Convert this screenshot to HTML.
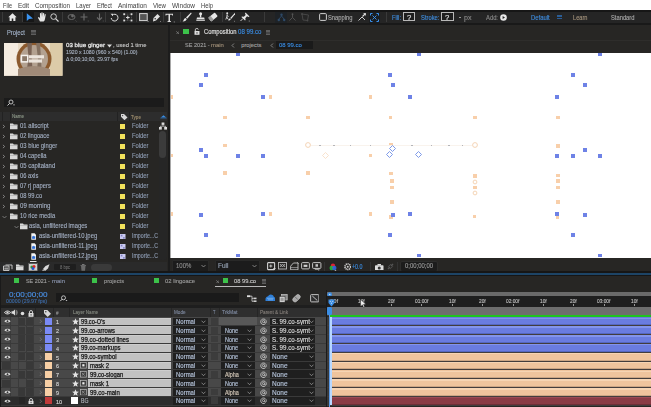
<!DOCTYPE html><html><head><meta charset="utf-8"><style>
html,body{margin:0;padding:0;width:651px;height:407px;overflow:hidden;background:#1c1c1c}
body>div{position:absolute}
.t{position:absolute;white-space:nowrap;font-family:"Liberation Sans",sans-serif;transform-origin:0 0;-webkit-text-stroke:0.12px currentColor}
</style></head><body>
<div style="left:0px;top:0px;width:651px;height:407px;background:#1c1c1c;"></div>
<div style="left:0px;top:0px;width:651px;height:10.5px;background:#ffffff;"></div>
<div class="t" style="left:3px;top:2.10px;font-size:7.8px;line-height:7.8px;color:#404040;font-weight:normal;transform:scaleX(0.716);-webkit-text-stroke:0;">File</div>
<div class="t" style="left:18px;top:2.10px;font-size:7.8px;line-height:7.8px;color:#404040;font-weight:normal;transform:scaleX(0.818);-webkit-text-stroke:0;">Edit</div>
<div class="t" style="left:35px;top:2.10px;font-size:7.8px;line-height:7.8px;color:#404040;font-weight:normal;transform:scaleX(0.807);-webkit-text-stroke:0;">Composition</div>
<div class="t" style="left:76px;top:2.10px;font-size:7.8px;line-height:7.8px;color:#404040;font-weight:normal;transform:scaleX(0.769);-webkit-text-stroke:0;">Layer</div>
<div class="t" style="left:97px;top:2.10px;font-size:7.8px;line-height:7.8px;color:#404040;font-weight:normal;transform:scaleX(0.758);-webkit-text-stroke:0;">Effect</div>
<div class="t" style="left:118px;top:2.10px;font-size:7.8px;line-height:7.8px;color:#404040;font-weight:normal;transform:scaleX(0.836);-webkit-text-stroke:0;">Animation</div>
<div class="t" style="left:153px;top:2.10px;font-size:7.8px;line-height:7.8px;color:#404040;font-weight:normal;transform:scaleX(0.775);-webkit-text-stroke:0;">View</div>
<div class="t" style="left:172px;top:2.10px;font-size:7.8px;line-height:7.8px;color:#404040;font-weight:normal;transform:scaleX(0.829);-webkit-text-stroke:0;">Window</div>
<div class="t" style="left:201px;top:2.10px;font-size:7.8px;line-height:7.8px;color:#404040;font-weight:normal;transform:scaleX(0.748);-webkit-text-stroke:0;">Help</div>
<div style="left:0px;top:10.5px;width:651px;height:12.5px;background:#252525;"></div>
<div style="left:0px;top:10.4px;width:651px;height:1.3px;background:#161616;"></div>
<div style="left:0px;top:22.8px;width:651px;height:2.3px;background:#191919;"></div>
<div style="left:0px;top:25.1px;width:168.3px;height:247.9px;background:#272624;"></div>
<div class="t" style="left:7px;top:29.91px;font-size:6.6px;line-height:6.6px;color:#a6b6cc;font-weight:normal;transform:scaleX(0.876);">Project</div>
<div style="left:31px;top:30.2px;width:4.6px;height:5.2px;background:#5e5e5e;"></div>
<div style="left:31px;top:31.8px;width:4.6px;height:0.5px;background:#454545;"></div>
<div style="left:31px;top:33.4px;width:4.6px;height:0.5px;background:#454545;"></div>
<svg style="position:absolute;left:4px;top:43px;" width="58.5" height="32.8" viewBox="0 0 58.5 32.8"><defs><filter id="bl" x="-5%" y="-5%" width="110%" height="110%"><feGaussianBlur stdDeviation="0.5"/></filter><clipPath id="cp"><rect width="58.5" height="32.8"/></clipPath></defs>
<g clip-path="url(#cp)"><rect width="59" height="33" fill="#e9dbc6"/>
<g filter="url(#bl)">
<rect x="-2" y="-2" width="16" height="37" fill="#f5ece0"/>
<rect x="46" y="-2" width="15" height="37" fill="#dccba8"/>
<circle cx="30" cy="16" r="17.5" fill="#8c5a2e"/>
<circle cx="30" cy="16" r="14" fill="#b3a190"/>
<path d="M23 -1 L28 -1 L27.5 12 L29 34 L22 34 L24.5 14Z" fill="#7a6454"/>
<path d="M32 -1 L36 -1 L38 34 L32.5 34 L34 16Z" fill="#837060"/>
<path d="M14 26 Q30 20 46 26 L46 34 L14 34Z" fill="#a08a78"/>
<rect x="16.7" y="11.7" width="7.8" height="7.9" fill="#f6f2ee"/>
<rect x="18.2" y="13.2" width="4.8" height="4.9" fill="#8a7868"/>
<rect x="25" y="12.2" width="15" height="3.2" fill="#ece4dc"/>
<rect x="25" y="16.4" width="13" height="3.2" fill="#ece4dc"/>
</g></g></svg>
<div class="t" style="left:66px;top:42.69px;font-size:5.8px;line-height:5.8px;color:#dadada;font-weight:normal;transform:scaleX(1.061);-webkit-text-stroke:0.35px #dadada;">03 blue ginger</div>
<svg style="position:absolute;left:107px;top:43.5px;" width="5" height="4" viewBox="0 0 5 4"><path d="M0 0.5 L5 0.5 L2.5 3.5Z" fill="#ddd"/></svg>
<div class="t" style="left:113px;top:42.86px;font-size:5.6px;line-height:5.6px;color:#c8c8c8;font-weight:normal;transform:scaleX(1.042);">, used 1 time</div>
<div class="t" style="left:66px;top:49.93px;font-size:5.4px;line-height:5.4px;color:#a9b3c2;font-weight:normal;transform:scaleX(0.965);">1920 x 1080  (960 x 540) (1.00)</div>
<div class="t" style="left:66px;top:56.83px;font-size:5.4px;line-height:5.4px;color:#a9b3c2;font-weight:normal;transform:scaleX(0.936);">Δ 0;00;10;00, 29.97 fps</div>
<div style="left:4.3px;top:98px;width:160px;height:9px;background:#1b1b1b;"></div>
<svg style="position:absolute;left:6px;top:99px;" width="10" height="8" viewBox="0 0 10 8"><circle cx="5" cy="3" r="2" fill="none" stroke="#ccc" stroke-width="0.9"/><path d="M3.6 4.4 L1.5 6.5" stroke="#ccc" stroke-width="1"/><path d="M7 5.5 L9 5.5 L8 6.7Z" fill="#ccc"/></svg>
<div style="left:0px;top:112px;width:167px;height:8.5px;background:#2d2d2d;"></div>
<div style="left:1.5px;top:112px;width:0.8px;height:8.5px;background:#222;"></div>
<div style="left:9.5px;top:112px;width:0.8px;height:8.5px;background:#222;"></div>
<div style="left:116.8px;top:112px;width:0.8px;height:8.5px;background:#222;"></div>
<div style="left:128.5px;top:112px;width:0.8px;height:8.5px;background:#222;"></div>
<div class="t" style="left:12px;top:114.24px;font-size:5.5px;line-height:5.5px;color:#8f9a8a;font-weight:normal;transform:scaleX(0.818);">Name</div>
<svg style="position:absolute;left:119.5px;top:112.5px;" width="8" height="7.5" viewBox="0 0 8 7.5"><path d="M1 1 L4 1 L7.5 4.5 L4.5 7.2 L1 3.8Z" fill="#d8d8d8"/><circle cx="2.6" cy="2.6" r="0.7" fill="#444"/></svg>
<div class="t" style="left:131px;top:114.74px;font-size:5.5px;line-height:5.5px;color:#a08f6e;font-weight:normal;transform:scaleX(0.839);">Type</div>
<svg style="position:absolute;left:159.5px;top:113.5px;" width="7" height="5" viewBox="0 0 7 5"><path d="M0.8 3.6 L3.5 1.3 L6.2 3.6Z" fill="#3a8ee6"/><rect x="0.3" y="3.7" width="6.4" height="0.7" fill="#2a6ab0"/></svg>
<svg style="position:absolute;left:2.3px;top:124px;" width="4" height="5" viewBox="0 0 4 5"><path d="M0.9 0.9 L2.7 2.5 L0.9 4.1" fill="none" stroke="#9a9a9a" stroke-width="0.8"/></svg>
<svg style="position:absolute;left:10px;top:123px;" width="8" height="6.5" viewBox="0 0 8 6.5"><path d="M0 0.5 L3 0.5 L3.8 1.5 L7.5 1.5 L7.5 6.2 L0 6.2Z" fill="#d9d9d9"/><rect x="0" y="2.2" width="7.5" height="0.5" fill="#999"/></svg>
<div class="t" style="left:19.6px;top:123.34px;font-size:6.8px;line-height:6.8px;color:#a4b0c4;font-weight:normal;transform:scaleX(0.883);">01 allscript</div>
<div style="left:120px;top:124px;width:5.2px;height:5px;background:#f2e25c;"></div>
<div class="t" style="left:132px;top:123.34px;font-size:6.8px;line-height:6.8px;color:#8f9db4;font-weight:normal;transform:scaleX(0.856);">Folder</div>
<svg style="position:absolute;left:2.3px;top:134px;" width="4" height="5" viewBox="0 0 4 5"><path d="M0.9 0.9 L2.7 2.5 L0.9 4.1" fill="none" stroke="#9a9a9a" stroke-width="0.8"/></svg>
<svg style="position:absolute;left:10px;top:133px;" width="8" height="6.5" viewBox="0 0 8 6.5"><path d="M0 0.5 L3 0.5 L3.8 1.5 L7.5 1.5 L7.5 6.2 L0 6.2Z" fill="#d9d9d9"/><rect x="0" y="2.2" width="7.5" height="0.5" fill="#999"/></svg>
<div class="t" style="left:19.6px;top:133.34px;font-size:6.8px;line-height:6.8px;color:#a4b0c4;font-weight:normal;transform:scaleX(0.845);">02 lingoace</div>
<div style="left:120px;top:134px;width:5.2px;height:5px;background:#f2e25c;"></div>
<div class="t" style="left:132px;top:133.34px;font-size:6.8px;line-height:6.8px;color:#8f9db4;font-weight:normal;transform:scaleX(0.856);">Folder</div>
<svg style="position:absolute;left:2.3px;top:144px;" width="4" height="5" viewBox="0 0 4 5"><path d="M0.9 0.9 L2.7 2.5 L0.9 4.1" fill="none" stroke="#9a9a9a" stroke-width="0.8"/></svg>
<svg style="position:absolute;left:10px;top:143px;" width="8" height="6.5" viewBox="0 0 8 6.5"><path d="M0 0.5 L3 0.5 L3.8 1.5 L7.5 1.5 L7.5 6.2 L0 6.2Z" fill="#d9d9d9"/><rect x="0" y="2.2" width="7.5" height="0.5" fill="#999"/></svg>
<div class="t" style="left:19.6px;top:143.34px;font-size:6.8px;line-height:6.8px;color:#a4b0c4;font-weight:normal;transform:scaleX(0.861);">03 blue ginger</div>
<div style="left:120px;top:144px;width:5.2px;height:5px;background:#f2e25c;"></div>
<div class="t" style="left:132px;top:143.34px;font-size:6.8px;line-height:6.8px;color:#8f9db4;font-weight:normal;transform:scaleX(0.856);">Folder</div>
<svg style="position:absolute;left:2.3px;top:154px;" width="4" height="5" viewBox="0 0 4 5"><path d="M0.9 0.9 L2.7 2.5 L0.9 4.1" fill="none" stroke="#9a9a9a" stroke-width="0.8"/></svg>
<svg style="position:absolute;left:10px;top:153px;" width="8" height="6.5" viewBox="0 0 8 6.5"><path d="M0 0.5 L3 0.5 L3.8 1.5 L7.5 1.5 L7.5 6.2 L0 6.2Z" fill="#d9d9d9"/><rect x="0" y="2.2" width="7.5" height="0.5" fill="#999"/></svg>
<div class="t" style="left:19.6px;top:153.34px;font-size:6.8px;line-height:6.8px;color:#a4b0c4;font-weight:normal;transform:scaleX(0.858);">04 capella</div>
<div style="left:120px;top:154px;width:5.2px;height:5px;background:#f2e25c;"></div>
<div class="t" style="left:132px;top:153.34px;font-size:6.8px;line-height:6.8px;color:#8f9db4;font-weight:normal;transform:scaleX(0.856);">Folder</div>
<svg style="position:absolute;left:2.3px;top:164px;" width="4" height="5" viewBox="0 0 4 5"><path d="M0.9 0.9 L2.7 2.5 L0.9 4.1" fill="none" stroke="#9a9a9a" stroke-width="0.8"/></svg>
<svg style="position:absolute;left:10px;top:163px;" width="8" height="6.5" viewBox="0 0 8 6.5"><path d="M0 0.5 L3 0.5 L3.8 1.5 L7.5 1.5 L7.5 6.2 L0 6.2Z" fill="#d9d9d9"/><rect x="0" y="2.2" width="7.5" height="0.5" fill="#999"/></svg>
<div class="t" style="left:19.6px;top:163.34px;font-size:6.8px;line-height:6.8px;color:#a4b0c4;font-weight:normal;transform:scaleX(0.870);">05 capitaland</div>
<div style="left:120px;top:164px;width:5.2px;height:5px;background:#f2e25c;"></div>
<div class="t" style="left:132px;top:163.34px;font-size:6.8px;line-height:6.8px;color:#8f9db4;font-weight:normal;transform:scaleX(0.856);">Folder</div>
<svg style="position:absolute;left:2.3px;top:174px;" width="4" height="5" viewBox="0 0 4 5"><path d="M0.9 0.9 L2.7 2.5 L0.9 4.1" fill="none" stroke="#9a9a9a" stroke-width="0.8"/></svg>
<svg style="position:absolute;left:10px;top:173px;" width="8" height="6.5" viewBox="0 0 8 6.5"><path d="M0 0.5 L3 0.5 L3.8 1.5 L7.5 1.5 L7.5 6.2 L0 6.2Z" fill="#d9d9d9"/><rect x="0" y="2.2" width="7.5" height="0.5" fill="#999"/></svg>
<div class="t" style="left:19.6px;top:173.34px;font-size:6.8px;line-height:6.8px;color:#a4b0c4;font-weight:normal;transform:scaleX(0.849);">06 axis</div>
<div style="left:120px;top:174px;width:5.2px;height:5px;background:#f2e25c;"></div>
<div class="t" style="left:132px;top:173.34px;font-size:6.8px;line-height:6.8px;color:#8f9db4;font-weight:normal;transform:scaleX(0.856);">Folder</div>
<svg style="position:absolute;left:2.3px;top:184px;" width="4" height="5" viewBox="0 0 4 5"><path d="M0.9 0.9 L2.7 2.5 L0.9 4.1" fill="none" stroke="#9a9a9a" stroke-width="0.8"/></svg>
<svg style="position:absolute;left:10px;top:183px;" width="8" height="6.5" viewBox="0 0 8 6.5"><path d="M0 0.5 L3 0.5 L3.8 1.5 L7.5 1.5 L7.5 6.2 L0 6.2Z" fill="#d9d9d9"/><rect x="0" y="2.2" width="7.5" height="0.5" fill="#999"/></svg>
<div class="t" style="left:19.6px;top:183.34px;font-size:6.8px;line-height:6.8px;color:#a4b0c4;font-weight:normal;transform:scaleX(0.858);">07 rj papers</div>
<div style="left:120px;top:184px;width:5.2px;height:5px;background:#f2e25c;"></div>
<div class="t" style="left:132px;top:183.34px;font-size:6.8px;line-height:6.8px;color:#8f9db4;font-weight:normal;transform:scaleX(0.856);">Folder</div>
<svg style="position:absolute;left:2.3px;top:194px;" width="4" height="5" viewBox="0 0 4 5"><path d="M0.9 0.9 L2.7 2.5 L0.9 4.1" fill="none" stroke="#9a9a9a" stroke-width="0.8"/></svg>
<svg style="position:absolute;left:10px;top:193px;" width="8" height="6.5" viewBox="0 0 8 6.5"><path d="M0 0.5 L3 0.5 L3.8 1.5 L7.5 1.5 L7.5 6.2 L0 6.2Z" fill="#d9d9d9"/><rect x="0" y="2.2" width="7.5" height="0.5" fill="#999"/></svg>
<div class="t" style="left:19.6px;top:193.34px;font-size:6.8px;line-height:6.8px;color:#a4b0c4;font-weight:normal;transform:scaleX(0.851);">08 99.co</div>
<div style="left:120px;top:194px;width:5.2px;height:5px;background:#f2e25c;"></div>
<div class="t" style="left:132px;top:193.34px;font-size:6.8px;line-height:6.8px;color:#8f9db4;font-weight:normal;transform:scaleX(0.856);">Folder</div>
<svg style="position:absolute;left:2.3px;top:204px;" width="4" height="5" viewBox="0 0 4 5"><path d="M0.9 0.9 L2.7 2.5 L0.9 4.1" fill="none" stroke="#9a9a9a" stroke-width="0.8"/></svg>
<svg style="position:absolute;left:10px;top:203px;" width="8" height="6.5" viewBox="0 0 8 6.5"><path d="M0 0.5 L3 0.5 L3.8 1.5 L7.5 1.5 L7.5 6.2 L0 6.2Z" fill="#d9d9d9"/><rect x="0" y="2.2" width="7.5" height="0.5" fill="#999"/></svg>
<div class="t" style="left:19.6px;top:203.34px;font-size:6.8px;line-height:6.8px;color:#a4b0c4;font-weight:normal;transform:scaleX(0.897);">09 morning</div>
<div style="left:120px;top:204px;width:5.2px;height:5px;background:#f2e25c;"></div>
<div class="t" style="left:132px;top:203.34px;font-size:6.8px;line-height:6.8px;color:#8f9db4;font-weight:normal;transform:scaleX(0.856);">Folder</div>
<svg style="position:absolute;left:2px;top:214.5px;" width="5" height="4" viewBox="0 0 5 4"><path d="M0.5 1 L2.5 3 L4.5 1" fill="none" stroke="#8a8a8a" stroke-width="0.8"/></svg>
<svg style="position:absolute;left:10px;top:213px;" width="8" height="6.5" viewBox="0 0 8 6.5"><path d="M0 0.5 L3 0.5 L3.8 1.5 L7.5 1.5 L7.5 6.2 L0 6.2Z" fill="#d9d9d9"/><rect x="0" y="2.2" width="7.5" height="0.5" fill="#999"/></svg>
<div class="t" style="left:19.6px;top:213.34px;font-size:6.8px;line-height:6.8px;color:#a4b0c4;font-weight:normal;transform:scaleX(0.862);">10 rice media</div>
<div style="left:120px;top:214px;width:5.2px;height:5px;background:#f2e25c;"></div>
<div class="t" style="left:132px;top:213.34px;font-size:6.8px;line-height:6.8px;color:#8f9db4;font-weight:normal;transform:scaleX(0.856);">Folder</div>
<svg style="position:absolute;left:13.5px;top:224.5px;" width="5" height="4" viewBox="0 0 5 4"><path d="M0.5 1 L2.5 3 L4.5 1" fill="none" stroke="#8a8a8a" stroke-width="0.8"/></svg>
<svg style="position:absolute;left:20px;top:223px;" width="8" height="6.5" viewBox="0 0 8 6.5"><path d="M0 0.5 L3 0.5 L3.8 1.5 L7.5 1.5 L7.5 6.2 L0 6.2Z" fill="#d9d9d9"/><rect x="0" y="2.2" width="7.5" height="0.5" fill="#999"/></svg>
<div class="t" style="left:28.7px;top:223.34px;font-size:6.8px;line-height:6.8px;color:#a4b0c4;font-weight:normal;transform:scaleX(0.857);">asia, unfiltered images</div>
<div style="left:120px;top:224px;width:5.2px;height:5px;background:#f2e25c;"></div>
<div class="t" style="left:132px;top:223.34px;font-size:6.8px;line-height:6.8px;color:#8f9db4;font-weight:normal;transform:scaleX(0.856);">Folder</div>
<svg style="position:absolute;left:30.8px;top:232.5px;" width="5.5" height="7" viewBox="0 0 5.5 7"><path d="M0.3 0.3 L3.6 0.3 L5.2 1.9 L5.2 6.7 L0.3 6.7Z" fill="#f2f2f2"/><path d="M1.2 5.6 L2.4 2.5 L3.6 5.6Z" fill="#2f6fd6"/><rect x="1.2" y="3.3" width="3" height="2.4" fill="#2f6fd6"/></svg>
<div class="t" style="left:39.2px;top:233.34px;font-size:6.8px;line-height:6.8px;color:#a4b0c4;font-weight:normal;transform:scaleX(0.865);">asia-unfiltered-10.jpeg</div>
<svg style="position:absolute;left:120px;top:233.5px;" width="5.5" height="5.5" viewBox="0 0 5.5 5.5"><rect x="0" y="0" width="5.5" height="5.5" fill="#c9c9f0"/><rect x="0.8" y="0.8" width="1.6" height="1.6" fill="#8080c0"/><rect x="3.1" y="3.1" width="1.6" height="1.6" fill="#8080c0"/></svg>
<div class="t" style="left:132px;top:233.34px;font-size:6.8px;line-height:6.8px;color:#8f9db4;font-weight:normal;transform:scaleX(0.773);">Importe...C</div>
<svg style="position:absolute;left:30.8px;top:242.5px;" width="5.5" height="7" viewBox="0 0 5.5 7"><path d="M0.3 0.3 L3.6 0.3 L5.2 1.9 L5.2 6.7 L0.3 6.7Z" fill="#f2f2f2"/><path d="M1.2 5.6 L2.4 2.5 L3.6 5.6Z" fill="#2f6fd6"/><rect x="1.2" y="3.3" width="3" height="2.4" fill="#2f6fd6"/></svg>
<div class="t" style="left:39.2px;top:243.34px;font-size:6.8px;line-height:6.8px;color:#a4b0c4;font-weight:normal;transform:scaleX(0.872);">asia-unfiltered-11.jpeg</div>
<svg style="position:absolute;left:120px;top:243.5px;" width="5.5" height="5.5" viewBox="0 0 5.5 5.5"><rect x="0" y="0" width="5.5" height="5.5" fill="#c9c9f0"/><rect x="0.8" y="0.8" width="1.6" height="1.6" fill="#8080c0"/><rect x="3.1" y="3.1" width="1.6" height="1.6" fill="#8080c0"/></svg>
<div class="t" style="left:132px;top:243.34px;font-size:6.8px;line-height:6.8px;color:#8f9db4;font-weight:normal;transform:scaleX(0.773);">Importe...C</div>
<svg style="position:absolute;left:30.8px;top:252.5px;" width="5.5" height="7" viewBox="0 0 5.5 7"><path d="M0.3 0.3 L3.6 0.3 L5.2 1.9 L5.2 6.7 L0.3 6.7Z" fill="#f2f2f2"/><path d="M1.2 5.6 L2.4 2.5 L3.6 5.6Z" fill="#2f6fd6"/><rect x="1.2" y="3.3" width="3" height="2.4" fill="#2f6fd6"/></svg>
<div class="t" style="left:39.2px;top:253.34px;font-size:6.8px;line-height:6.8px;color:#a4b0c4;font-weight:normal;transform:scaleX(0.865);">asia-unfiltered-12.jpeg</div>
<svg style="position:absolute;left:120px;top:253.5px;" width="5.5" height="5.5" viewBox="0 0 5.5 5.5"><rect x="0" y="0" width="5.5" height="5.5" fill="#c9c9f0"/><rect x="0.8" y="0.8" width="1.6" height="1.6" fill="#8080c0"/><rect x="3.1" y="3.1" width="1.6" height="1.6" fill="#8080c0"/></svg>
<div class="t" style="left:132px;top:253.34px;font-size:6.8px;line-height:6.8px;color:#8f9db4;font-weight:normal;transform:scaleX(0.773);">Importe...C</div>
<svg style="position:absolute;left:30px;top:261px;" width="6.5" height="1.5" viewBox="0 0 6.5 1.5"><rect width="6.5" height="1.5" fill="#e8e8e8"/></svg>
<svg style="position:absolute;left:159px;top:122px;" width="8" height="8" viewBox="0 0 8 8"><rect x="2.6" y="0.5" width="2.8" height="2.4" fill="#ddd"/><rect x="0" y="5" width="2.8" height="2.6" fill="#ddd"/><rect x="5.2" y="5" width="2.8" height="2.6" fill="#ddd"/><path d="M4 3 L4 4.2 M1.4 5 L1.4 4.2 L6.6 4.2 L6.6 5" stroke="#ddd" stroke-width="0.7" fill="none"/></svg>
<div style="left:159px;top:131px;width:7.5px;height:129px;background:#262626;border-radius:3px;"></div>
<div style="left:159.3px;top:131px;width:7px;height:27px;background:#3b3b3b;border-radius:3.5px;"></div>
<div style="left:0px;top:261.5px;width:167px;height:11px;background:#2a2a2a;"></div>
<svg style="position:absolute;left:2.5px;top:263.5px;" width="10" height="7" viewBox="0 0 10 7"><path d="M0.5 2 L6 2 L6 6.5 L0.5 6.5Z" fill="none" stroke="#d0d0d0" stroke-width="0.9"/><path d="M2.5 1 L9 1 L9 5.2" fill="none" stroke="#d0d0d0" stroke-width="0.9"/><rect x="1.3" y="3.5" width="4" height="2.2" fill="#999"/></svg>
<svg style="position:absolute;left:16px;top:264px;" width="8" height="6.5" viewBox="0 0 8 6.5"><path d="M0 0.5 L3 0.5 L3.8 1.5 L7.5 1.5 L7.5 6.2 L0 6.2Z" fill="#d9d9d9"/><rect x="0" y="2.2" width="7.5" height="0.5" fill="#888"/></svg>
<svg style="position:absolute;left:27.5px;top:263px;" width="10" height="8.5" viewBox="0 0 10 8.5"><rect x="0" y="0" width="10" height="8.5" fill="#5a5a5a"/><rect x="1" y="1" width="8" height="6.5" fill="#cfcfcf"/><circle cx="4" cy="4" r="1.6" fill="#2e9b3a"/><circle cx="6" cy="3.5" r="1.5" fill="#d22"/><circle cx="5" cy="5.5" r="1.5" fill="#2255cc"/></svg>
<svg style="position:absolute;left:42px;top:263.5px;" width="8" height="7.5" viewBox="0 0 8 7.5"><path d="M7.5 0.3 L3.5 2 L1 5 L3 7 L6 4.5 Z" fill="#d8d8d8"/><path d="M1 5 L0 7.5 L2.5 6.5Z" fill="#aaa"/></svg>
<div style="left:54px;top:263.8px;width:21.5px;height:6.6px;background:#1e1e1e;border-radius:1px;"></div>
<div class="t" style="left:59.5px;top:265.37px;font-size:5px;line-height:5px;color:#6a6a6a;font-weight:normal;transform:scaleX(0.818);">8 bpc</div>
<svg style="position:absolute;left:80px;top:263.5px;" width="6.5" height="7" viewBox="0 0 6.5 7"><rect x="0.5" y="1" width="5.5" height="0.8" fill="#777"/><rect x="2" y="0" width="2.5" height="1" fill="#777"/><path d="M1 2 L5.5 2 L5 6.8 L1.5 6.8Z" fill="#6a6a6a"/></svg>
<div style="left:91.4px;top:263.6px;width:20.3px;height:7px;background:#3a3a3a;border-radius:3.5px;"></div>
<div style="left:170px;top:25.1px;width:481px;height:247.9px;background:#272624;"></div>
<div style="left:170px;top:40px;width:481px;height:0.6px;background:#2e2d2b;"></div>
<svg style="position:absolute;left:175.5px;top:30.5px;" width="3.5" height="3.5" viewBox="0 0 3.5 3.5"><path d="M0.3 0.3 L3.2 3.2 M3.2 0.3 L0.3 3.2" stroke="#8a8a8a" stroke-width="0.7"/></svg>
<div style="left:183px;top:29px;width:6px;height:5.2px;background:#3cc24a;"></div>
<svg style="position:absolute;left:194px;top:28px;" width="6" height="7" viewBox="0 0 6 7"><path d="M1.3 3 L1.3 1.8 Q1.3 0.5 2.8 0.5 Q4.3 0.5 4.3 1.5" fill="none" stroke="#ddd" stroke-width="0.9"/><rect x="0.5" y="3" width="5" height="3.8" fill="#ddd"/><rect x="2.5" y="4.2" width="1" height="1.5" fill="#333"/></svg>
<div class="t" style="left:204px;top:28.81px;font-size:6.6px;line-height:6.6px;color:#e2e2e2;font-weight:normal;transform:scaleX(0.886);">Composition</div>
<div class="t" style="left:237.5px;top:28.81px;font-size:6.6px;line-height:6.6px;color:#3a8ee6;font-weight:normal;transform:scaleX(0.928);">08 99.co</div>
<div style="left:265.5px;top:30.2px;width:4.8px;height:5.3px;background:#5e5e5e;"></div>
<div style="left:265.5px;top:31.8px;width:4.8px;height:0.5px;background:#454545;"></div>
<div style="left:265.5px;top:33.4px;width:4.8px;height:0.5px;background:#454545;"></div>
<div class="t" style="left:184.7px;top:43.09px;font-size:5.8px;line-height:5.8px;color:#a0a0a0;font-weight:normal;transform:scaleX(0.958);">SE 2021 -</div>
<div class="t" style="left:211.1px;top:43.09px;font-size:5.8px;line-height:5.8px;color:#a08f78;font-weight:normal;transform:scaleX(1.026);">main</div>
<svg style="position:absolute;left:231px;top:43px;" width="4" height="5" viewBox="0 0 4 5"><path d="M3 0.5 L1 2.5 L3 4.5" fill="none" stroke="#999" stroke-width="0.8"/></svg>
<div class="t" style="left:241.2px;top:43.09px;font-size:5.8px;line-height:5.8px;color:#a0a0a0;font-weight:normal;transform:scaleX(1.000);">projects</div>
<svg style="position:absolute;left:269.5px;top:42.8px;" width="4" height="5" viewBox="0 0 4 5"><path d="M3 0.5 L1 2.5 L3 4.5" fill="none" stroke="#999" stroke-width="0.8"/></svg>
<div style="left:275.5px;top:41.2px;width:37px;height:7.8px;background:#1a1a1a;"></div>
<div class="t" style="left:278.7px;top:43.09px;font-size:5.8px;line-height:5.8px;color:#3a8ee6;font-weight:normal;transform:scaleX(1.025);">08 99.co</div>
<div style="left:170px;top:52.5px;width:481px;height:205px;background:#ffffff;"></div>
<div style="left:170px;top:52.5px;width:1.2px;height:205px;background:#a8a8a8;"></div>
<div style="left:171.2px;top:95.0px;width:1.6px;height:3.6px;background:#f8cfaa;"></div>
<div style="left:268.5px;top:95.0px;width:3.6px;height:3.6px;background:#f8cfaa;"></div>
<div style="left:223.2px;top:115.7px;width:3.6px;height:3.6px;background:#f8cfaa;"></div>
<div style="left:368.9px;top:95.0px;width:3.6px;height:3.6px;background:#f8cfaa;"></div>
<div style="left:306.3px;top:115.7px;width:3.6px;height:3.6px;background:#f8cfaa;"></div>
<div style="left:388.9px;top:115.7px;width:3.6px;height:3.6px;background:#f8cfaa;"></div>
<div style="left:473.1px;top:115.7px;width:3.6px;height:3.6px;background:#f8cfaa;"></div>
<div style="left:556.1px;top:115.7px;width:3.6px;height:3.6px;background:#f8cfaa;"></div>
<div style="left:223.3px;top:143.5px;width:3.6px;height:3.6px;background:#f8cfaa;"></div>
<div style="left:171.2px;top:153.7px;width:1.6px;height:3.6px;background:#f8cfaa;"></div>
<div style="left:223.3px;top:171.4px;width:3.6px;height:3.6px;background:#f8cfaa;"></div>
<div style="left:389.4px;top:142.8px;width:3.6px;height:3.6px;background:#f8cfaa;"></div>
<div style="left:368.9px;top:153.7px;width:3.6px;height:3.6px;background:#f8cfaa;"></div>
<div style="left:306.3px;top:171.4px;width:3.6px;height:3.6px;background:#f8cfaa;"></div>
<div style="left:389.4px;top:171.9px;width:3.6px;height:3.6px;background:#f8cfaa;"></div>
<div style="left:390.2px;top:179.2px;width:3.6px;height:3.6px;background:#f8cfaa;"></div>
<div style="left:390.2px;top:185.7px;width:3.6px;height:3.6px;background:#f8cfaa;"></div>
<div style="left:390.2px;top:200.4px;width:3.6px;height:3.6px;background:#f8cfaa;"></div>
<div style="left:473.1px;top:174.0px;width:3.6px;height:3.6px;background:#f8cfaa;"></div>
<div style="left:473.1px;top:185.8px;width:3.6px;height:3.6px;background:#f8cfaa;"></div>
<div style="left:556.1px;top:144.4px;width:3.6px;height:3.6px;background:#f8cfaa;"></div>
<div style="left:556.1px;top:173.9px;width:3.6px;height:3.6px;background:#f8cfaa;"></div>
<div style="left:556.1px;top:179.2px;width:3.6px;height:3.6px;background:#f8cfaa;"></div>
<div style="left:556.1px;top:185.7px;width:3.6px;height:3.6px;background:#f8cfaa;"></div>
<div style="left:556.1px;top:200.2px;width:3.6px;height:3.6px;background:#f8cfaa;"></div>
<div style="left:171.2px;top:212.2px;width:1.6px;height:3.6px;background:#f8cfaa;"></div>
<div style="left:268.7px;top:212.2px;width:3.6px;height:3.6px;background:#f8cfaa;"></div>
<div style="left:390.0px;top:200.5px;width:3.6px;height:3.6px;background:#f8cfaa;"></div>
<div style="left:368.9px;top:212.2px;width:3.6px;height:3.6px;background:#f8cfaa;"></div>
<div style="left:389.2px;top:215.2px;width:3.6px;height:3.6px;background:#f8cfaa;"></div>
<div style="left:472.7px;top:214.9px;width:3.6px;height:3.6px;background:#f8cfaa;"></div>
<div style="left:555.7px;top:200.7px;width:3.6px;height:3.6px;background:#f8cfaa;"></div>
<div style="left:555.7px;top:215.2px;width:3.6px;height:3.6px;background:#f8cfaa;"></div>
<div style="left:235.9px;top:52.5px;width:4.0px;height:3.8px;background:#6e82e6;"></div>
<div style="left:204.0px;top:73.2px;width:4.0px;height:4.0px;background:#6e82e6;"></div>
<div style="left:198.9px;top:83.0px;width:4.0px;height:4.0px;background:#6e82e6;"></div>
<div style="left:260.9px;top:94.8px;width:4.0px;height:4.0px;background:#6e82e6;"></div>
<div style="left:387.7px;top:73.2px;width:4.0px;height:4.0px;background:#6e82e6;"></div>
<div style="left:390.7px;top:83.0px;width:4.0px;height:4.0px;background:#6e82e6;"></div>
<div style="left:408.0px;top:94.8px;width:4.0px;height:4.0px;background:#6e82e6;"></div>
<div style="left:416.9px;top:52.5px;width:4.0px;height:3.8px;background:#6e82e6;"></div>
<div style="left:598.0px;top:52.5px;width:4.0px;height:3.8px;background:#6e82e6;"></div>
<div style="left:571.2px;top:73.2px;width:4.0px;height:4.0px;background:#6e82e6;"></div>
<div style="left:582.8px;top:83.0px;width:4.0px;height:4.0px;background:#6e82e6;"></div>
<div style="left:555.1px;top:94.8px;width:4.0px;height:4.0px;background:#6e82e6;"></div>
<div style="left:198.9px;top:148.0px;width:4.0px;height:4.0px;background:#6e82e6;"></div>
<div style="left:204.0px;top:153.5px;width:4.0px;height:4.0px;background:#6e82e6;"></div>
<div style="left:235.9px;top:153.5px;width:4.0px;height:4.0px;background:#6e82e6;"></div>
<div style="left:260.9px;top:153.5px;width:4.0px;height:4.0px;background:#6e82e6;"></div>
<div style="left:582.8px;top:148.0px;width:4.0px;height:4.0px;background:#6e82e6;"></div>
<div style="left:555.1px;top:153.5px;width:4.0px;height:4.0px;background:#6e82e6;"></div>
<div style="left:571.2px;top:153.5px;width:4.0px;height:4.0px;background:#6e82e6;"></div>
<div style="left:598.0px;top:153.5px;width:4.0px;height:4.0px;background:#6e82e6;"></div>
<div style="left:199.0px;top:212.9px;width:4.0px;height:4.0px;background:#6e82e6;"></div>
<div style="left:261.1px;top:212.0px;width:4.0px;height:4.0px;background:#6e82e6;"></div>
<div style="left:204.0px;top:233.2px;width:4.0px;height:4.0px;background:#6e82e6;"></div>
<div style="left:235.8px;top:253.9px;width:4.0px;height:3.6px;background:#6e82e6;"></div>
<div style="left:390.7px;top:212.9px;width:4.0px;height:4.0px;background:#6e82e6;"></div>
<div style="left:408.0px;top:212.0px;width:4.0px;height:4.0px;background:#6e82e6;"></div>
<div style="left:387.5px;top:233.2px;width:4.0px;height:4.0px;background:#6e82e6;"></div>
<div style="left:416.8px;top:253.9px;width:4.0px;height:3.6px;background:#6e82e6;"></div>
<div style="left:555.0px;top:212.2px;width:4.0px;height:4.0px;background:#6e82e6;"></div>
<div style="left:582.8px;top:212.7px;width:4.0px;height:4.0px;background:#6e82e6;"></div>
<div style="left:571.1px;top:233.0px;width:4.0px;height:4.0px;background:#6e82e6;"></div>
<div style="left:597.9px;top:253.9px;width:4.0px;height:3.6px;background:#6e82e6;"></div>
<div style="left:311px;top:145px;width:161px;height:0.8px;background:#f9f3ed;"></div>
<div style="left:319.0px;top:144.8px;width:1.6px;height:1.1px;background:#b4b4b8;"></div>
<div style="left:333.09999999999997px;top:144.8px;width:1.6px;height:1.1px;background:#b4b4b8;"></div>
<div style="left:349.9px;top:144.8px;width:1.6px;height:1.1px;background:#b4b4b8;"></div>
<div style="left:369.9px;top:144.8px;width:1.6px;height:1.1px;background:#b4b4b8;"></div>
<div style="left:411.4px;top:144.8px;width:1.6px;height:1.1px;background:#b4b4b8;"></div>
<div style="left:430.7px;top:144.8px;width:1.6px;height:1.1px;background:#b4b4b8;"></div>
<div style="left:448.2px;top:144.8px;width:1.6px;height:1.1px;background:#b4b4b8;"></div>
<div style="left:461.5px;top:144.8px;width:1.6px;height:1.1px;background:#b4b4b8;"></div>
<svg style="position:absolute;left:305.1px;top:142.3px;" width="6" height="6" viewBox="0 0 6 6"><circle cx="3" cy="3" r="2.4" fill="none" stroke="#f3cfae" stroke-width="0.9"/></svg>
<svg style="position:absolute;left:471.9px;top:142.3px;" width="6" height="6" viewBox="0 0 6 6"><circle cx="3" cy="3" r="2.4" fill="none" stroke="#f3cfae" stroke-width="0.9"/></svg>
<svg style="position:absolute;left:471.9px;top:178.5px;" width="6" height="6" viewBox="0 0 6 6"><circle cx="3" cy="3" r="1.9" fill="none" stroke="#f3cfae" stroke-width="0.9"/></svg>
<svg style="position:absolute;left:471.9px;top:189.9px;" width="6" height="6" viewBox="0 0 6 6"><circle cx="3" cy="3" r="1.9" fill="none" stroke="#f3cfae" stroke-width="0.9"/></svg>
<svg style="position:absolute;left:322px;top:151.6px;" width="7" height="7" viewBox="0 0 7 7"><path d="M3.5 0.5 L6.5 3.5 L3.5 6.5 L0.5 3.5Z" fill="none" stroke="#f8dcc2" stroke-width="0.8"/></svg>
<svg style="position:absolute;left:389.0px;top:145.3px;" width="7" height="7" viewBox="0 0 7 7"><path d="M3.5 0.5 L6.5 3.5 L3.5 6.5 L0.5 3.5Z" fill="none" stroke="#6f8fe6" stroke-width="0.9"/></svg>
<svg style="position:absolute;left:385.8px;top:151.4px;" width="7" height="7" viewBox="0 0 7 7"><path d="M3.5 0.5 L6.5 3.5 L3.5 6.5 L0.5 3.5Z" fill="none" stroke="#6f8fe6" stroke-width="0.9"/></svg>
<svg style="position:absolute;left:415.3px;top:151.4px;" width="7" height="7" viewBox="0 0 7 7"><path d="M3.5 0.5 L6.5 3.5 L3.5 6.5 L0.5 3.5Z" fill="none" stroke="#6f8fe6" stroke-width="0.9"/></svg>
<div style="left:173.4px;top:261.4px;width:34.8px;height:9.2px;background:#1c1c1c;box-shadow:0 0 0 0.6px #2c2c2c;"></div>
<div class="t" style="left:175.7px;top:263.18px;font-size:6.4px;line-height:6.4px;color:#8f8f8f;font-weight:normal;transform:scaleX(0.935);">100%</div>
<svg style="position:absolute;left:201px;top:263.5px;" width="5" height="4" viewBox="0 0 5 4"><path d="M0.5 1 L2.5 3 L4.5 1" fill="none" stroke="#999" stroke-width="0.8"/></svg>
<div style="left:215.7px;top:261.4px;width:43px;height:9.2px;background:#1c1c1c;box-shadow:0 0 0 0.6px #2c2c2c;"></div>
<div class="t" style="left:218px;top:263.18px;font-size:6.4px;line-height:6.4px;color:#9aa6b8;font-weight:normal;transform:scaleX(1.018);">Full</div>
<svg style="position:absolute;left:252px;top:263.5px;" width="5" height="4" viewBox="0 0 5 4"><path d="M0.5 1 L2.5 3 L4.5 1" fill="none" stroke="#999" stroke-width="0.8"/></svg>
<svg style="position:absolute;left:266.5px;top:261.8px;" width="9" height="9" viewBox="0 0 9 9"><rect x="0.6" y="0.6" width="7" height="7" rx="0.6" fill="none" stroke="#d0d0d0" stroke-width="1.1"/><path d="M2.3 4 L5.3 4 M3.8 2.5 L3.8 5.5" stroke="#d0d0d0" stroke-width="0.9"/><path d="M6 6 L8.8 6 L7.4 8.2Z" fill="#d0d0d0"/></svg>
<svg style="position:absolute;left:278px;top:262.3px;" width="9" height="7.5" viewBox="0 0 9 7.5"><rect x="0.5" y="0.5" width="8" height="6.5" fill="none" stroke="#bdbdbd" stroke-width="0.9"/><path d="M2 2 L4.5 5 M4.5 2 L2 5 M4.5 2 L7 5 M7 2 L4.5 5" stroke="#bdbdbd" stroke-width="0.8"/></svg>
<svg style="position:absolute;left:290px;top:261.8px;" width="9" height="8.5" viewBox="0 0 9 8.5"><path d="M0.6 7.8 L0.6 4.2 L3.4 1 L8 1 L8 7.8Z" fill="none" stroke="#c4c4c4" stroke-width="0.9"/><path d="M0.6 5.6 L8 5.6" stroke="#c4c4c4" stroke-width="0.6"/><path d="M7.2 0 L8.8 1.8" stroke="#c4c4c4" stroke-width="0.7"/></svg>
<svg style="position:absolute;left:301px;top:262.3px;" width="9" height="7.5" viewBox="0 0 9 7.5"><rect x="0.6" y="0.6" width="7.8" height="6.3" fill="none" stroke="#c4c4c4" stroke-width="1" rx="1"/><rect x="2.6" y="2.7" width="3.8" height="2.2" fill="#d0d0d0"/></svg>
<svg style="position:absolute;left:312px;top:261.8px;" width="9.5" height="9" viewBox="0 0 9.5 9"><rect x="0.6" y="0.6" width="8.3" height="5.8" rx="0.8" fill="none" stroke="#c4c4c4" stroke-width="1"/><rect x="3.5" y="2.2" width="2.5" height="2.5" fill="#c4c4c4"/><path d="M3.2 6.4 L3.2 7.5 L6.2 7.5 L6.2 6.4" fill="none" stroke="#c4c4c4" stroke-width="0.7"/><path d="M5.8 7.6 L7.8 7.6 L6.8 8.8Z" fill="#c4c4c4"/></svg>
<div style="left:324px;top:262px;width:0.7px;height:9px;background:#333;"></div>
<svg style="position:absolute;left:329px;top:262.5px;" width="8" height="8" viewBox="0 0 8 8"><circle cx="4" cy="2.8" r="2.2" fill="#d23"/><circle cx="2.7" cy="5" r="2.2" fill="#2b3" opacity="0.9"/><circle cx="5.3" cy="5" r="2.2" fill="#36d" opacity="0.9"/><path d="M5.5 7 L7.5 7 L6.5 8Z" fill="#ccc"/></svg>
<svg style="position:absolute;left:343.5px;top:263px;" width="7.5" height="7.5" viewBox="0 0 7.5 7.5"><circle cx="3.75" cy="3.75" r="2.8" fill="none" stroke="#ccc" stroke-width="1.6" stroke-dasharray="1.2 0.6"/><circle cx="3.75" cy="3.75" r="1" fill="#ccc"/></svg>
<div class="t" style="left:352.3px;top:262.67px;font-size:7px;line-height:7px;color:#3a8ee6;font-weight:normal;transform:scaleX(0.760);">+0.0</div>
<div style="left:370px;top:262px;width:0.7px;height:9px;background:#333;"></div>
<svg style="position:absolute;left:375px;top:263.5px;" width="8.5" height="6.5" viewBox="0 0 8.5 6.5"><rect x="0" y="1.3" width="8.5" height="5.2" rx="0.8" fill="#ddd"/><rect x="2.5" y="0" width="3.5" height="1.5" fill="#ddd"/><circle cx="4.25" cy="4" r="1.5" fill="#333"/></svg>
<svg style="position:absolute;left:387px;top:263px;" width="7" height="7" viewBox="0 0 7 7"><path d="M1 6 L3 4 M4 3 L6 1" stroke="#555" stroke-width="1.5"/><rect x="2" y="2" width="3" height="3" fill="none" stroke="#555" stroke-width="0.8" transform="rotate(45 3.5 3.5)"/></svg>
<div style="left:397px;top:262px;width:0.7px;height:9px;background:#333;"></div>
<div style="left:401px;top:261.5px;width:36px;height:9.5px;background:#1c1c1c;border-radius:1px;box-shadow:0 0 0 0.6px #333;"></div>
<div class="t" style="left:404.5px;top:263.01px;font-size:6.6px;line-height:6.6px;color:#9a9a9a;font-weight:normal;transform:scaleX(0.898);">0;00;00;00</div>
<div style="left:0px;top:271.4px;width:651px;height:1.2px;background:#161616;"></div>
<div style="left:0px;top:272.6px;width:651px;height:2.6px;background:#1d4466;"></div>
<div style="left:0px;top:275.2px;width:651px;height:0.8px;background:#161616;"></div>
<div style="left:0px;top:276px;width:651px;height:131px;background:#272624;"></div>
<div style="left:0px;top:276px;width:1px;height:131px;background:#1a1a1a;"></div>
<div style="left:14px;top:278.4px;width:4.5px;height:4.8px;background:#3cc24a;"></div>
<div class="t" style="left:25.6px;top:279.29px;font-size:5.8px;line-height:5.8px;color:#a0a0a0;font-weight:normal;transform:scaleX(0.927);">SE 2021 - </div>
<div class="t" style="left:52px;top:279.29px;font-size:5.8px;line-height:5.8px;color:#8a94ac;font-weight:normal;transform:scaleX(1.034);">main</div>
<div style="left:92.4px;top:278.4px;width:5px;height:4.8px;background:#3cc24a;"></div>
<div class="t" style="left:104px;top:279.29px;font-size:5.8px;line-height:5.8px;color:#9a9a9a;font-weight:normal;transform:scaleX(0.985);">projects</div>
<div style="left:154px;top:278.4px;width:4.5px;height:4.8px;background:#3cc24a;"></div>
<div class="t" style="left:165px;top:279.29px;font-size:5.8px;line-height:5.8px;color:#9a9a9a;font-weight:normal;transform:scaleX(1.011);">02 lingoace</div>
<svg style="position:absolute;left:215.5px;top:279.5px;" width="3.5" height="3.5" viewBox="0 0 3.5 3.5"><path d="M0.3 0.3 L3.2 3.2 M3.2 0.3 L0.3 3.2" stroke="#8a8a8a" stroke-width="0.7"/></svg>
<div style="left:223px;top:278.4px;width:5px;height:4.8px;background:#3cc24a;"></div>
<div class="t" style="left:234.4px;top:279.29px;font-size:5.8px;line-height:5.8px;color:#c8c8c8;font-weight:normal;transform:scaleX(0.989);">08 99.co</div>
<div style="left:262px;top:279px;width:4px;height:4.8px;background:#5e5e5e;"></div>
<div style="left:262px;top:280.5px;width:4px;height:0.5px;background:#454545;"></div>
<div style="left:262px;top:282.0px;width:4px;height:0.5px;background:#454545;"></div>
<div style="left:215px;top:286px;width:51px;height:1.3px;background:#b8b8b8;"></div>
<div class="t" style="left:8.6px;top:290.98px;font-size:7.7px;line-height:7.7px;color:#4a92ea;font-weight:normal;transform:scaleX(1.063);">0;00;00;00</div>
<div class="t" style="left:6.2px;top:300.45px;font-size:4.9px;line-height:4.9px;color:#3d6aa6;font-weight:normal;transform:scaleX(1.070);">00000 (29.97 fps)</div>
<div style="left:56px;top:293px;width:183px;height:9px;background:#1a1a1a;"></div>
<svg style="position:absolute;left:59px;top:294.5px;" width="10" height="7" viewBox="0 0 10 7"><circle cx="4.5" cy="2.8" r="2" fill="none" stroke="#ccc" stroke-width="0.9"/><path d="M3.1 4.2 L1.2 6.2" stroke="#ccc" stroke-width="1"/><path d="M6.5 5 L8.5 5 L7.5 6.2Z" fill="#ccc"/></svg>
<svg style="position:absolute;left:247px;top:294.5px;" width="10" height="7.5" viewBox="0 0 10 7.5"><rect x="0" y="0.3" width="3.2" height="1.8" fill="#e0e0e0"/><rect x="6.5" y="2.6" width="3" height="1.6" fill="#d0d0d0"/><rect x="6.5" y="5.4" width="3" height="1.8" fill="#d0d0d0"/><path d="M3 1.2 L5 1.2 L5 6.3 L6.5 6.3 M5 3.4 L6.5 3.4" stroke="#d0d0d0" stroke-width="0.8" fill="none"/></svg>
<svg style="position:absolute;left:264.5px;top:294px;" width="10.5" height="7.5" viewBox="0 0 10.5 7.5"><path d="M0.5 7 L0.5 4.5 Q1 2.5 3 2.3 Q4 0.3 6 0.5 Q8.5 0.8 9 3 Q10.3 3.5 10.2 5 L10.2 7Z" fill="#2f7fd8"/><path d="M2 4.3 L8.5 4.3 M3 5.8 L8 5.8" stroke="#9cc8f5" stroke-width="0.6"/></svg>
<svg style="position:absolute;left:279px;top:294px;" width="8.5" height="8.5" viewBox="0 0 8.5 8.5"><rect x="2.5" y="0.3" width="5.7" height="5.7" fill="#8a8a8a" stroke="#cfcfcf" stroke-width="0.6"/><rect x="0.3" y="2.5" width="5.7" height="5.7" fill="#d8d8d8" stroke="#262626" stroke-width="0.5"/><rect x="1.5" y="3.7" width="3.2" height="3.2" fill="#9a9a9a"/></svg>
<svg style="position:absolute;left:292px;top:294px;" width="9" height="8.5" viewBox="0 0 9 8.5"><g transform="rotate(-45 4.5 4.25)"><rect x="0.2" y="2" width="8.6" height="4.5" rx="2.25" fill="#a8a8a8" stroke="#cfcfcf" stroke-width="0.6"/><path d="M4.5 2.2 L4.5 6.3" stroke="#5a5a5a" stroke-width="0.7"/></g></svg>
<svg style="position:absolute;left:309.5px;top:294px;" width="9.5" height="8.5" viewBox="0 0 9.5 8.5"><rect x="0.6" y="0.6" width="8.3" height="7.3" rx="0.8" fill="#2e2e2e" stroke="#cfcfcf" stroke-width="0.9"/><path d="M2.3 2 L7.3 6.5" stroke="#cfcfcf" stroke-width="0.9"/></svg>
<div style="left:1px;top:304.5px;width:325px;height:3.8px;background:#1e1e1e;"></div>
<div style="left:1px;top:308.3px;width:325px;height:8.8px;background:#2f2f2f;"></div>
<svg style="position:absolute;left:3.5px;top:310.3px;" width="7" height="5" viewBox="0 0 7 5"><path d="M0.4 2.5 Q3.5 -0.6 6.6 2.5 Q3.5 5.6 0.4 2.5Z" fill="none" stroke="#e0e0e0" stroke-width="0.9"/><circle cx="3.5" cy="2.5" r="1.1" fill="#e0e0e0"/></svg>
<svg style="position:absolute;left:11px;top:309.3px;" width="7.5" height="7" viewBox="0 0 7.5 7"><path d="M0.5 2.3 L2 2.3 L4 0.5 L4 6.5 L2 4.7 L0.5 4.7Z" fill="#ddd"/><path d="M4.6 0.6 A3 3 0 0 1 4.6 6.4Z" fill="#777"/></svg>
<svg style="position:absolute;left:20px;top:310.5px;" width="5" height="5" viewBox="0 0 5 5"><circle cx="2.5" cy="2.5" r="1.8" fill="#ddd"/></svg>
<svg style="position:absolute;left:28px;top:309.5px;" width="6" height="7" viewBox="0 0 6 7"><path d="M1.5 3 L1.5 2 Q1.5 0.5 3 0.5 Q4.5 0.5 4.5 2 L4.5 3" fill="none" stroke="#ddd" stroke-width="0.9"/><rect x="0.5" y="3" width="5" height="3.8" fill="#ddd"/><rect x="2.6" y="4.2" width="0.9" height="1.4" fill="#333"/></svg>
<div style="left:35px;top:308.3px;width:0.8px;height:8.8px;background:#262626;"></div>
<div style="left:53px;top:308.3px;width:0.8px;height:8.8px;background:#262626;"></div>
<div style="left:68.7px;top:308.3px;width:0.8px;height:8.8px;background:#262626;"></div>
<div style="left:170.8px;top:308.3px;width:0.8px;height:8.8px;background:#262626;"></div>
<div style="left:209.5px;top:308.3px;width:0.8px;height:8.8px;background:#262626;"></div>
<div style="left:218.5px;top:308.3px;width:0.8px;height:8.8px;background:#262626;"></div>
<div style="left:257px;top:308.3px;width:0.8px;height:8.8px;background:#262626;"></div>
<svg style="position:absolute;left:42.5px;top:309px;" width="8.5" height="8" viewBox="0 0 8.5 8"><path d="M1 1 L4.3 1 L8 4.7 L4.7 8 L1 4.3Z" fill="#d8d8d8"/><circle cx="2.8" cy="2.8" r="0.8" fill="#444"/></svg>
<div class="t" style="left:56px;top:311.37px;font-size:5px;line-height:5px;color:#8a8a8a;font-weight:normal;transform:scaleX(0.899);">#</div>
<div class="t" style="left:72.9px;top:310.36px;font-size:5.6px;line-height:5.6px;color:#858a80;font-weight:normal;transform:scaleX(0.823);">Layer Name</div>
<div class="t" style="left:174px;top:310.36px;font-size:5.6px;line-height:5.6px;color:#7f8aa0;font-weight:normal;transform:scaleX(0.821);">Mode</div>
<div class="t" style="left:212.6px;top:310.36px;font-size:5.6px;line-height:5.6px;color:#7f8aa0;font-weight:normal;transform:scaleX(0.702);">T</div>
<div class="t" style="left:222px;top:310.36px;font-size:5.6px;line-height:5.6px;color:#7f8aa0;font-weight:normal;transform:scaleX(0.901);">TrkMat</div>
<div class="t" style="left:260px;top:310.36px;font-size:5.6px;line-height:5.6px;color:#857f7a;font-weight:normal;transform:scaleX(0.833);">Parent &amp; Link</div>
<div style="left:1px;top:317.4px;width:325px;height:7.9px;background:#484848;"></div>
<div style="left:10px;top:317.4px;width:0.6px;height:7.9px;background:#3a3a3a;"></div>
<div style="left:18px;top:317.4px;width:0.6px;height:7.9px;background:#3a3a3a;"></div>
<div style="left:25.5px;top:317.4px;width:0.6px;height:7.9px;background:#3a3a3a;"></div>
<div style="left:33px;top:317.4px;width:0.6px;height:7.9px;background:#3a3a3a;"></div>
<div style="left:18.6px;top:317.79999999999995px;width:6.9px;height:7.1000000000000005px;background:#383838;"></div>
<div style="left:26.1px;top:317.79999999999995px;width:6.9px;height:7.1000000000000005px;background:#383838;"></div>
<svg style="position:absolute;left:3.5px;top:319.4px;" width="7" height="4.5" viewBox="0 0 7 4.5"><path d="M0.3 2.2 Q3.5 -0.6 6.7 2.2 Q3.5 5 0.3 2.2Z" fill="#e6e6e6"/><circle cx="3.5" cy="2.2" r="1" fill="#333"/></svg>
<svg style="position:absolute;left:38.5px;top:319.4px;" width="3.5" height="4.5" viewBox="0 0 3.5 4.5"><path d="M0.8 0.5 L2.6 2.2 L0.8 4" fill="none" stroke="#8a8a8a" stroke-width="0.6"/></svg>
<div style="left:44.6px;top:317.7px;width:7.2px;height:7.3px;background:#7a8af5;"></div>
<div class="t" style="left:56px;top:319.22px;font-size:6px;line-height:6px;color:#d8d8d8;font-weight:normal;transform:scaleX(0.899);">1</div>
<svg style="position:absolute;left:71.5px;top:318.0px;" width="7" height="7" viewBox="0 0 7 7"><path d="M3.5 0.2 L4.4 2.6 L6.9 2.7 L4.9 4.3 L5.6 6.8 L3.5 5.4 L1.4 6.8 L2.1 4.3 L0.1 2.7 L2.6 2.6Z" fill="#e4e4e4"/></svg>
<div style="left:79px;top:317.5px;width:91.6px;height:7.7px;background:#c2c2c2;"></div>
<div style="left:79px;top:317.5px;width:91.6px;height:0.8px;background:#cdcdcd;"></div>
<div class="t" style="left:81.1px;top:318.98px;font-size:6.4px;line-height:6.4px;color:#161616;font-weight:normal;transform:scaleX(0.886);font-weight:normal;-webkit-text-stroke:0.25px #161616;">99.co-O's</div>
<div style="left:173.4px;top:317.5px;width:34.6px;height:7.7px;background:#1f1f1f;"></div>
<div class="t" style="left:176px;top:318.98px;font-size:6.4px;line-height:6.4px;color:#b4c2d8;font-weight:normal;transform:scaleX(0.936);-webkit-text-stroke:0.15px #b4c2d8;">Normal</div>
<svg style="position:absolute;left:201px;top:319.9px;" width="5" height="3.5" viewBox="0 0 5 3.5"><path d="M0.5 0.7 L2.5 2.7 L4.5 0.7" fill="none" stroke="#aaa" stroke-width="0.7"/></svg>
<div style="left:210.5px;top:318.0px;width:7.2px;height:6.8px;background:#3c3c3c;"></div>
<div style="left:219px;top:317.4px;width:37.5px;height:7.9px;background:#585858;"></div>
<svg style="position:absolute;left:259.6px;top:317.9px;" width="7" height="7" viewBox="0 0 7 7"><path d="M5.2 6 A2.8 2.8 0 1 1 6.3 3.5 L6.3 4.2 Q6.2 5.1 5.4 5.1 Q4.6 5.1 4.6 4.2 L4.6 3.5" fill="none" stroke="#cfcfcf" stroke-width="0.8"/><circle cx="3.5" cy="3.5" r="1.1" fill="none" stroke="#cfcfcf" stroke-width="0.75"/></svg>
<div style="left:269.8px;top:317.5px;width:45.7px;height:7.7px;background:#1f1f1f;"></div>
<div class="t" style="left:272px;top:318.98px;font-size:6.4px;line-height:6.4px;color:#d8d8d8;font-weight:normal;transform:scaleX(0.971);-webkit-text-stroke:0.15px #d8d8d8;">S. 99.co-symt</div>
<svg style="position:absolute;left:309px;top:319.9px;" width="5" height="3.5" viewBox="0 0 5 3.5"><path d="M0.5 0.7 L2.5 2.7 L4.5 0.7" fill="none" stroke="#aaa" stroke-width="0.7"/></svg>
<div style="left:1px;top:325.29999999999995px;width:325px;height:0.93px;background:#3a3a3a;"></div>
<div style="left:1px;top:326.22999999999996px;width:325px;height:7.9px;background:#484848;"></div>
<div style="left:10px;top:326.22999999999996px;width:0.6px;height:7.9px;background:#3a3a3a;"></div>
<div style="left:18px;top:326.22999999999996px;width:0.6px;height:7.9px;background:#3a3a3a;"></div>
<div style="left:25.5px;top:326.22999999999996px;width:0.6px;height:7.9px;background:#3a3a3a;"></div>
<div style="left:33px;top:326.22999999999996px;width:0.6px;height:7.9px;background:#3a3a3a;"></div>
<div style="left:18.6px;top:326.62999999999994px;width:6.9px;height:7.1000000000000005px;background:#383838;"></div>
<div style="left:26.1px;top:326.62999999999994px;width:6.9px;height:7.1000000000000005px;background:#383838;"></div>
<svg style="position:absolute;left:3.5px;top:328.22999999999996px;" width="7" height="4.5" viewBox="0 0 7 4.5"><path d="M0.3 2.2 Q3.5 -0.6 6.7 2.2 Q3.5 5 0.3 2.2Z" fill="#e6e6e6"/><circle cx="3.5" cy="2.2" r="1" fill="#333"/></svg>
<svg style="position:absolute;left:38.5px;top:328.22999999999996px;" width="3.5" height="4.5" viewBox="0 0 3.5 4.5"><path d="M0.8 0.5 L2.6 2.2 L0.8 4" fill="none" stroke="#8a8a8a" stroke-width="0.6"/></svg>
<div style="left:44.6px;top:326.53px;width:7.2px;height:7.3px;background:#7a8af5;"></div>
<div class="t" style="left:56px;top:328.05px;font-size:6px;line-height:6px;color:#d8d8d8;font-weight:normal;transform:scaleX(0.899);">2</div>
<svg style="position:absolute;left:71.5px;top:326.83px;" width="7" height="7" viewBox="0 0 7 7"><path d="M3.5 0.2 L4.4 2.6 L6.9 2.7 L4.9 4.3 L5.6 6.8 L3.5 5.4 L1.4 6.8 L2.1 4.3 L0.1 2.7 L2.6 2.6Z" fill="#e4e4e4"/></svg>
<div style="left:79px;top:326.33px;width:91.6px;height:7.7px;background:#c2c2c2;"></div>
<div style="left:79px;top:326.33px;width:91.6px;height:0.8px;background:#cdcdcd;"></div>
<div class="t" style="left:81.1px;top:327.81px;font-size:6.4px;line-height:6.4px;color:#161616;font-weight:normal;transform:scaleX(0.917);font-weight:normal;-webkit-text-stroke:0.25px #161616;">99.co-arrows</div>
<div style="left:173.4px;top:326.33px;width:34.6px;height:7.7px;background:#1f1f1f;"></div>
<div class="t" style="left:176px;top:327.81px;font-size:6.4px;line-height:6.4px;color:#b4c2d8;font-weight:normal;transform:scaleX(0.936);-webkit-text-stroke:0.15px #b4c2d8;">Normal</div>
<svg style="position:absolute;left:201px;top:328.72999999999996px;" width="5" height="3.5" viewBox="0 0 5 3.5"><path d="M0.5 0.7 L2.5 2.7 L4.5 0.7" fill="none" stroke="#aaa" stroke-width="0.7"/></svg>
<div style="left:210.5px;top:326.83px;width:7.2px;height:6.8px;background:#3c3c3c;"></div>
<div style="left:221.3px;top:326.33px;width:33.5px;height:7.7px;background:#1f1f1f;"></div>
<div class="t" style="left:224.5px;top:327.81px;font-size:6.4px;line-height:6.4px;color:#b4c2d8;font-weight:normal;transform:scaleX(0.850);-webkit-text-stroke:0.15px #b4c2d8;">None</div>
<svg style="position:absolute;left:247px;top:328.72999999999996px;" width="5" height="3.5" viewBox="0 0 5 3.5"><path d="M0.5 0.7 L2.5 2.7 L4.5 0.7" fill="none" stroke="#aaa" stroke-width="0.7"/></svg>
<svg style="position:absolute;left:259.6px;top:326.72999999999996px;" width="7" height="7" viewBox="0 0 7 7"><path d="M5.2 6 A2.8 2.8 0 1 1 6.3 3.5 L6.3 4.2 Q6.2 5.1 5.4 5.1 Q4.6 5.1 4.6 4.2 L4.6 3.5" fill="none" stroke="#cfcfcf" stroke-width="0.8"/><circle cx="3.5" cy="3.5" r="1.1" fill="none" stroke="#cfcfcf" stroke-width="0.75"/></svg>
<div style="left:269.8px;top:326.33px;width:45.7px;height:7.7px;background:#1f1f1f;"></div>
<div class="t" style="left:272px;top:327.81px;font-size:6.4px;line-height:6.4px;color:#d8d8d8;font-weight:normal;transform:scaleX(0.971);-webkit-text-stroke:0.15px #d8d8d8;">S. 99.co-symt</div>
<svg style="position:absolute;left:309px;top:328.72999999999996px;" width="5" height="3.5" viewBox="0 0 5 3.5"><path d="M0.5 0.7 L2.5 2.7 L4.5 0.7" fill="none" stroke="#aaa" stroke-width="0.7"/></svg>
<div style="left:1px;top:334.12999999999994px;width:325px;height:0.93px;background:#3a3a3a;"></div>
<div style="left:1px;top:335.06px;width:325px;height:7.9px;background:#484848;"></div>
<div style="left:10px;top:335.06px;width:0.6px;height:7.9px;background:#3a3a3a;"></div>
<div style="left:18px;top:335.06px;width:0.6px;height:7.9px;background:#3a3a3a;"></div>
<div style="left:25.5px;top:335.06px;width:0.6px;height:7.9px;background:#3a3a3a;"></div>
<div style="left:33px;top:335.06px;width:0.6px;height:7.9px;background:#3a3a3a;"></div>
<div style="left:18.6px;top:335.46px;width:6.9px;height:7.1000000000000005px;background:#383838;"></div>
<div style="left:26.1px;top:335.46px;width:6.9px;height:7.1000000000000005px;background:#383838;"></div>
<svg style="position:absolute;left:3.5px;top:337.06px;" width="7" height="4.5" viewBox="0 0 7 4.5"><path d="M0.3 2.2 Q3.5 -0.6 6.7 2.2 Q3.5 5 0.3 2.2Z" fill="#e6e6e6"/><circle cx="3.5" cy="2.2" r="1" fill="#333"/></svg>
<svg style="position:absolute;left:38.5px;top:337.06px;" width="3.5" height="4.5" viewBox="0 0 3.5 4.5"><path d="M0.8 0.5 L2.6 2.2 L0.8 4" fill="none" stroke="#8a8a8a" stroke-width="0.6"/></svg>
<div style="left:44.6px;top:335.36px;width:7.2px;height:7.3px;background:#7a8af5;"></div>
<div class="t" style="left:56px;top:336.88px;font-size:6px;line-height:6px;color:#d8d8d8;font-weight:normal;transform:scaleX(0.899);">3</div>
<svg style="position:absolute;left:71.5px;top:335.66px;" width="7" height="7" viewBox="0 0 7 7"><path d="M3.5 0.2 L4.4 2.6 L6.9 2.7 L4.9 4.3 L5.6 6.8 L3.5 5.4 L1.4 6.8 L2.1 4.3 L0.1 2.7 L2.6 2.6Z" fill="#e4e4e4"/></svg>
<div style="left:79px;top:335.16px;width:91.6px;height:7.7px;background:#c2c2c2;"></div>
<div style="left:79px;top:335.16px;width:91.6px;height:0.8px;background:#cdcdcd;"></div>
<div class="t" style="left:81.1px;top:336.64px;font-size:6.4px;line-height:6.4px;color:#161616;font-weight:normal;transform:scaleX(0.952);font-weight:normal;-webkit-text-stroke:0.25px #161616;">99.co-dotted lines</div>
<div style="left:173.4px;top:335.16px;width:34.6px;height:7.7px;background:#1f1f1f;"></div>
<div class="t" style="left:176px;top:336.64px;font-size:6.4px;line-height:6.4px;color:#b4c2d8;font-weight:normal;transform:scaleX(0.936);-webkit-text-stroke:0.15px #b4c2d8;">Normal</div>
<svg style="position:absolute;left:201px;top:337.56px;" width="5" height="3.5" viewBox="0 0 5 3.5"><path d="M0.5 0.7 L2.5 2.7 L4.5 0.7" fill="none" stroke="#aaa" stroke-width="0.7"/></svg>
<div style="left:210.5px;top:335.66px;width:7.2px;height:6.8px;background:#3c3c3c;"></div>
<div style="left:221.3px;top:335.16px;width:33.5px;height:7.7px;background:#1f1f1f;"></div>
<div class="t" style="left:224.5px;top:336.64px;font-size:6.4px;line-height:6.4px;color:#b4c2d8;font-weight:normal;transform:scaleX(0.850);-webkit-text-stroke:0.15px #b4c2d8;">None</div>
<svg style="position:absolute;left:247px;top:337.56px;" width="5" height="3.5" viewBox="0 0 5 3.5"><path d="M0.5 0.7 L2.5 2.7 L4.5 0.7" fill="none" stroke="#aaa" stroke-width="0.7"/></svg>
<svg style="position:absolute;left:259.6px;top:335.56px;" width="7" height="7" viewBox="0 0 7 7"><path d="M5.2 6 A2.8 2.8 0 1 1 6.3 3.5 L6.3 4.2 Q6.2 5.1 5.4 5.1 Q4.6 5.1 4.6 4.2 L4.6 3.5" fill="none" stroke="#cfcfcf" stroke-width="0.8"/><circle cx="3.5" cy="3.5" r="1.1" fill="none" stroke="#cfcfcf" stroke-width="0.75"/></svg>
<div style="left:269.8px;top:335.16px;width:45.7px;height:7.7px;background:#1f1f1f;"></div>
<div class="t" style="left:272px;top:336.64px;font-size:6.4px;line-height:6.4px;color:#d8d8d8;font-weight:normal;transform:scaleX(0.971);-webkit-text-stroke:0.15px #d8d8d8;">S. 99.co-symt</div>
<svg style="position:absolute;left:309px;top:337.56px;" width="5" height="3.5" viewBox="0 0 5 3.5"><path d="M0.5 0.7 L2.5 2.7 L4.5 0.7" fill="none" stroke="#aaa" stroke-width="0.7"/></svg>
<div style="left:1px;top:342.96px;width:325px;height:0.93px;background:#3a3a3a;"></div>
<div style="left:1px;top:343.89px;width:325px;height:7.9px;background:#484848;"></div>
<div style="left:10px;top:343.89px;width:0.6px;height:7.9px;background:#3a3a3a;"></div>
<div style="left:18px;top:343.89px;width:0.6px;height:7.9px;background:#3a3a3a;"></div>
<div style="left:25.5px;top:343.89px;width:0.6px;height:7.9px;background:#3a3a3a;"></div>
<div style="left:33px;top:343.89px;width:0.6px;height:7.9px;background:#3a3a3a;"></div>
<div style="left:18.6px;top:344.28999999999996px;width:6.9px;height:7.1000000000000005px;background:#383838;"></div>
<div style="left:26.1px;top:344.28999999999996px;width:6.9px;height:7.1000000000000005px;background:#383838;"></div>
<svg style="position:absolute;left:3.5px;top:345.89px;" width="7" height="4.5" viewBox="0 0 7 4.5"><path d="M0.3 2.2 Q3.5 -0.6 6.7 2.2 Q3.5 5 0.3 2.2Z" fill="#e6e6e6"/><circle cx="3.5" cy="2.2" r="1" fill="#333"/></svg>
<svg style="position:absolute;left:38.5px;top:345.89px;" width="3.5" height="4.5" viewBox="0 0 3.5 4.5"><path d="M0.8 0.5 L2.6 2.2 L0.8 4" fill="none" stroke="#8a8a8a" stroke-width="0.6"/></svg>
<div style="left:44.6px;top:344.19px;width:7.2px;height:7.3px;background:#7a8af5;"></div>
<div class="t" style="left:56px;top:345.71px;font-size:6px;line-height:6px;color:#d8d8d8;font-weight:normal;transform:scaleX(0.899);">4</div>
<svg style="position:absolute;left:71.5px;top:344.49px;" width="7" height="7" viewBox="0 0 7 7"><path d="M3.5 0.2 L4.4 2.6 L6.9 2.7 L4.9 4.3 L5.6 6.8 L3.5 5.4 L1.4 6.8 L2.1 4.3 L0.1 2.7 L2.6 2.6Z" fill="#e4e4e4"/></svg>
<div style="left:79px;top:343.99px;width:91.6px;height:7.7px;background:#c2c2c2;"></div>
<div style="left:79px;top:343.99px;width:91.6px;height:0.8px;background:#cdcdcd;"></div>
<div class="t" style="left:81.1px;top:345.47px;font-size:6.4px;line-height:6.4px;color:#161616;font-weight:normal;transform:scaleX(0.933);font-weight:normal;-webkit-text-stroke:0.25px #161616;">99.co-markups</div>
<div style="left:173.4px;top:343.99px;width:34.6px;height:7.7px;background:#1f1f1f;"></div>
<div class="t" style="left:176px;top:345.47px;font-size:6.4px;line-height:6.4px;color:#b4c2d8;font-weight:normal;transform:scaleX(0.936);-webkit-text-stroke:0.15px #b4c2d8;">Normal</div>
<svg style="position:absolute;left:201px;top:346.39px;" width="5" height="3.5" viewBox="0 0 5 3.5"><path d="M0.5 0.7 L2.5 2.7 L4.5 0.7" fill="none" stroke="#aaa" stroke-width="0.7"/></svg>
<div style="left:210.5px;top:344.49px;width:7.2px;height:6.8px;background:#3c3c3c;"></div>
<div style="left:221.3px;top:343.99px;width:33.5px;height:7.7px;background:#1f1f1f;"></div>
<div class="t" style="left:224.5px;top:345.47px;font-size:6.4px;line-height:6.4px;color:#b4c2d8;font-weight:normal;transform:scaleX(0.850);-webkit-text-stroke:0.15px #b4c2d8;">None</div>
<svg style="position:absolute;left:247px;top:346.39px;" width="5" height="3.5" viewBox="0 0 5 3.5"><path d="M0.5 0.7 L2.5 2.7 L4.5 0.7" fill="none" stroke="#aaa" stroke-width="0.7"/></svg>
<svg style="position:absolute;left:259.6px;top:344.39px;" width="7" height="7" viewBox="0 0 7 7"><path d="M5.2 6 A2.8 2.8 0 1 1 6.3 3.5 L6.3 4.2 Q6.2 5.1 5.4 5.1 Q4.6 5.1 4.6 4.2 L4.6 3.5" fill="none" stroke="#cfcfcf" stroke-width="0.8"/><circle cx="3.5" cy="3.5" r="1.1" fill="none" stroke="#cfcfcf" stroke-width="0.75"/></svg>
<div style="left:269.8px;top:343.99px;width:45.7px;height:7.7px;background:#1f1f1f;"></div>
<div class="t" style="left:272px;top:345.47px;font-size:6.4px;line-height:6.4px;color:#d8d8d8;font-weight:normal;transform:scaleX(0.971);-webkit-text-stroke:0.15px #d8d8d8;">S. 99.co-symt</div>
<svg style="position:absolute;left:309px;top:346.39px;" width="5" height="3.5" viewBox="0 0 5 3.5"><path d="M0.5 0.7 L2.5 2.7 L4.5 0.7" fill="none" stroke="#aaa" stroke-width="0.7"/></svg>
<div style="left:1px;top:351.78999999999996px;width:325px;height:0.93px;background:#3a3a3a;"></div>
<div style="left:1px;top:352.71999999999997px;width:325px;height:7.9px;background:#484848;"></div>
<div style="left:10px;top:352.71999999999997px;width:0.6px;height:7.9px;background:#3a3a3a;"></div>
<div style="left:18px;top:352.71999999999997px;width:0.6px;height:7.9px;background:#3a3a3a;"></div>
<div style="left:25.5px;top:352.71999999999997px;width:0.6px;height:7.9px;background:#3a3a3a;"></div>
<div style="left:33px;top:352.71999999999997px;width:0.6px;height:7.9px;background:#3a3a3a;"></div>
<div style="left:18.6px;top:353.11999999999995px;width:6.9px;height:7.1000000000000005px;background:#383838;"></div>
<div style="left:26.1px;top:353.11999999999995px;width:6.9px;height:7.1000000000000005px;background:#383838;"></div>
<svg style="position:absolute;left:3.5px;top:354.71999999999997px;" width="7" height="4.5" viewBox="0 0 7 4.5"><path d="M0.3 2.2 Q3.5 -0.6 6.7 2.2 Q3.5 5 0.3 2.2Z" fill="#e6e6e6"/><circle cx="3.5" cy="2.2" r="1" fill="#333"/></svg>
<svg style="position:absolute;left:38.5px;top:354.71999999999997px;" width="3.5" height="4.5" viewBox="0 0 3.5 4.5"><path d="M0.8 0.5 L2.6 2.2 L0.8 4" fill="none" stroke="#8a8a8a" stroke-width="0.6"/></svg>
<div style="left:44.6px;top:353.02px;width:7.2px;height:7.3px;background:#f7cfa5;"></div>
<div class="t" style="left:56px;top:354.54px;font-size:6px;line-height:6px;color:#d8d8d8;font-weight:normal;transform:scaleX(0.899);">5</div>
<svg style="position:absolute;left:71.5px;top:353.32px;" width="7" height="7" viewBox="0 0 7 7"><path d="M3.5 0.2 L4.4 2.6 L6.9 2.7 L4.9 4.3 L5.6 6.8 L3.5 5.4 L1.4 6.8 L2.1 4.3 L0.1 2.7 L2.6 2.6Z" fill="#e4e4e4"/></svg>
<div style="left:79px;top:352.82px;width:91.6px;height:7.7px;background:#c2c2c2;"></div>
<div style="left:79px;top:352.82px;width:91.6px;height:0.8px;background:#cdcdcd;"></div>
<div class="t" style="left:81.1px;top:354.30px;font-size:6.4px;line-height:6.4px;color:#161616;font-weight:normal;transform:scaleX(0.935);font-weight:normal;-webkit-text-stroke:0.25px #161616;">99.co-symbol</div>
<div style="left:173.4px;top:352.82px;width:34.6px;height:7.7px;background:#1f1f1f;"></div>
<div class="t" style="left:176px;top:354.30px;font-size:6.4px;line-height:6.4px;color:#b4c2d8;font-weight:normal;transform:scaleX(0.936);-webkit-text-stroke:0.15px #b4c2d8;">Normal</div>
<svg style="position:absolute;left:201px;top:355.21999999999997px;" width="5" height="3.5" viewBox="0 0 5 3.5"><path d="M0.5 0.7 L2.5 2.7 L4.5 0.7" fill="none" stroke="#aaa" stroke-width="0.7"/></svg>
<div style="left:210.5px;top:353.32px;width:7.2px;height:6.8px;background:#3c3c3c;"></div>
<div style="left:221.3px;top:352.82px;width:33.5px;height:7.7px;background:#1f1f1f;"></div>
<div class="t" style="left:224.5px;top:354.30px;font-size:6.4px;line-height:6.4px;color:#b4c2d8;font-weight:normal;transform:scaleX(0.850);-webkit-text-stroke:0.15px #b4c2d8;">None</div>
<svg style="position:absolute;left:247px;top:355.21999999999997px;" width="5" height="3.5" viewBox="0 0 5 3.5"><path d="M0.5 0.7 L2.5 2.7 L4.5 0.7" fill="none" stroke="#aaa" stroke-width="0.7"/></svg>
<svg style="position:absolute;left:259.6px;top:353.21999999999997px;" width="7" height="7" viewBox="0 0 7 7"><path d="M5.2 6 A2.8 2.8 0 1 1 6.3 3.5 L6.3 4.2 Q6.2 5.1 5.4 5.1 Q4.6 5.1 4.6 4.2 L4.6 3.5" fill="none" stroke="#cfcfcf" stroke-width="0.8"/><circle cx="3.5" cy="3.5" r="1.1" fill="none" stroke="#cfcfcf" stroke-width="0.75"/></svg>
<div style="left:269.8px;top:352.82px;width:45.7px;height:7.7px;background:#1f1f1f;"></div>
<div class="t" style="left:272px;top:354.30px;font-size:6.4px;line-height:6.4px;color:#b4c2d8;font-weight:normal;transform:scaleX(1.013);-webkit-text-stroke:0.15px #b4c2d8;">None</div>
<svg style="position:absolute;left:309px;top:355.21999999999997px;" width="5" height="3.5" viewBox="0 0 5 3.5"><path d="M0.5 0.7 L2.5 2.7 L4.5 0.7" fill="none" stroke="#aaa" stroke-width="0.7"/></svg>
<div style="left:1px;top:360.61999999999995px;width:325px;height:0.93px;background:#3a3a3a;"></div>
<div style="left:1px;top:361.54999999999995px;width:325px;height:7.9px;background:#484848;"></div>
<div style="left:10px;top:361.54999999999995px;width:0.6px;height:7.9px;background:#3a3a3a;"></div>
<div style="left:18px;top:361.54999999999995px;width:0.6px;height:7.9px;background:#3a3a3a;"></div>
<div style="left:25.5px;top:361.54999999999995px;width:0.6px;height:7.9px;background:#3a3a3a;"></div>
<div style="left:33px;top:361.54999999999995px;width:0.6px;height:7.9px;background:#3a3a3a;"></div>
<div style="left:26.1px;top:361.94999999999993px;width:6.9px;height:7.1000000000000005px;background:#383838;"></div>
<div style="left:2px;top:361.94999999999993px;width:8px;height:7.1000000000000005px;background:#383838;"></div>
<svg style="position:absolute;left:38.5px;top:363.54999999999995px;" width="3.5" height="4.5" viewBox="0 0 3.5 4.5"><path d="M0.8 0.5 L2.6 2.2 L0.8 4" fill="none" stroke="#8a8a8a" stroke-width="0.6"/></svg>
<div style="left:44.6px;top:361.84999999999997px;width:7.2px;height:7.3px;background:#f7cfa5;"></div>
<div class="t" style="left:56px;top:363.37px;font-size:6px;line-height:6px;color:#d8d8d8;font-weight:normal;transform:scaleX(0.899);">6</div>
<svg style="position:absolute;left:71.5px;top:362.15px;" width="7" height="7" viewBox="0 0 7 7"><path d="M3.5 0.2 L4.4 2.6 L6.9 2.7 L4.9 4.3 L5.6 6.8 L3.5 5.4 L1.4 6.8 L2.1 4.3 L0.1 2.7 L2.6 2.6Z" fill="#e4e4e4"/></svg>
<svg style="position:absolute;left:80px;top:362.34999999999997px;" width="6.7" height="6.5" viewBox="0 0 6.7 6.5"><rect x="0.4" y="0.4" width="5.9" height="5.7" fill="#3a3a3a" stroke="#bbb" stroke-width="0.7"/><rect x="2.3" y="2.2" width="2.2" height="2.2" fill="#eee"/></svg>
<div style="left:87.5px;top:361.65px;width:83.1px;height:7.7px;background:#c2c2c2;"></div>
<div style="left:87.5px;top:361.65px;width:83.1px;height:0.8px;background:#cdcdcd;"></div>
<div class="t" style="left:90px;top:363.13px;font-size:6.4px;line-height:6.4px;color:#161616;font-weight:normal;transform:scaleX(0.921);font-weight:normal;-webkit-text-stroke:0.25px #161616;">mask 2</div>
<div style="left:173.4px;top:361.65px;width:34.6px;height:7.7px;background:#1f1f1f;"></div>
<div class="t" style="left:176px;top:363.13px;font-size:6.4px;line-height:6.4px;color:#b4c2d8;font-weight:normal;transform:scaleX(0.936);-webkit-text-stroke:0.15px #b4c2d8;">Normal</div>
<svg style="position:absolute;left:201px;top:364.04999999999995px;" width="5" height="3.5" viewBox="0 0 5 3.5"><path d="M0.5 0.7 L2.5 2.7 L4.5 0.7" fill="none" stroke="#aaa" stroke-width="0.7"/></svg>
<div style="left:210.5px;top:362.15px;width:7.2px;height:6.8px;background:#484848;"></div>
<div style="left:221.3px;top:361.65px;width:33.5px;height:7.7px;background:#1f1f1f;"></div>
<div class="t" style="left:224.5px;top:363.13px;font-size:6.4px;line-height:6.4px;color:#b4c2d8;font-weight:normal;transform:scaleX(0.850);-webkit-text-stroke:0.15px #b4c2d8;">None</div>
<svg style="position:absolute;left:247px;top:364.04999999999995px;" width="5" height="3.5" viewBox="0 0 5 3.5"><path d="M0.5 0.7 L2.5 2.7 L4.5 0.7" fill="none" stroke="#aaa" stroke-width="0.7"/></svg>
<svg style="position:absolute;left:259.6px;top:362.04999999999995px;" width="7" height="7" viewBox="0 0 7 7"><path d="M5.2 6 A2.8 2.8 0 1 1 6.3 3.5 L6.3 4.2 Q6.2 5.1 5.4 5.1 Q4.6 5.1 4.6 4.2 L4.6 3.5" fill="none" stroke="#cfcfcf" stroke-width="0.8"/><circle cx="3.5" cy="3.5" r="1.1" fill="none" stroke="#cfcfcf" stroke-width="0.75"/></svg>
<div style="left:269.8px;top:361.65px;width:45.7px;height:7.7px;background:#1f1f1f;"></div>
<div class="t" style="left:272px;top:363.13px;font-size:6.4px;line-height:6.4px;color:#b4c2d8;font-weight:normal;transform:scaleX(1.013);-webkit-text-stroke:0.15px #b4c2d8;">None</div>
<svg style="position:absolute;left:309px;top:364.04999999999995px;" width="5" height="3.5" viewBox="0 0 5 3.5"><path d="M0.5 0.7 L2.5 2.7 L4.5 0.7" fill="none" stroke="#aaa" stroke-width="0.7"/></svg>
<div style="left:1px;top:369.44999999999993px;width:325px;height:0.93px;background:#3a3a3a;"></div>
<div style="left:1px;top:370.38px;width:325px;height:7.9px;background:#484848;"></div>
<div style="left:10px;top:370.38px;width:0.6px;height:7.9px;background:#3a3a3a;"></div>
<div style="left:18px;top:370.38px;width:0.6px;height:7.9px;background:#3a3a3a;"></div>
<div style="left:25.5px;top:370.38px;width:0.6px;height:7.9px;background:#3a3a3a;"></div>
<div style="left:33px;top:370.38px;width:0.6px;height:7.9px;background:#3a3a3a;"></div>
<div style="left:18.6px;top:370.78px;width:6.9px;height:7.1000000000000005px;background:#383838;"></div>
<div style="left:26.1px;top:370.78px;width:6.9px;height:7.1000000000000005px;background:#383838;"></div>
<svg style="position:absolute;left:3.5px;top:372.38px;" width="7" height="4.5" viewBox="0 0 7 4.5"><path d="M0.3 2.2 Q3.5 -0.6 6.7 2.2 Q3.5 5 0.3 2.2Z" fill="#e6e6e6"/><circle cx="3.5" cy="2.2" r="1" fill="#333"/></svg>
<svg style="position:absolute;left:38.5px;top:372.38px;" width="3.5" height="4.5" viewBox="0 0 3.5 4.5"><path d="M0.8 0.5 L2.6 2.2 L0.8 4" fill="none" stroke="#8a8a8a" stroke-width="0.6"/></svg>
<div style="left:44.6px;top:370.68px;width:7.2px;height:7.3px;background:#f7cfa5;"></div>
<div class="t" style="left:56px;top:372.20px;font-size:6px;line-height:6px;color:#d8d8d8;font-weight:normal;transform:scaleX(0.899);">7</div>
<svg style="position:absolute;left:71.5px;top:370.98px;" width="7" height="7" viewBox="0 0 7 7"><path d="M3.5 0.2 L4.4 2.6 L6.9 2.7 L4.9 4.3 L5.6 6.8 L3.5 5.4 L1.4 6.8 L2.1 4.3 L0.1 2.7 L2.6 2.6Z" fill="#e4e4e4"/></svg>
<svg style="position:absolute;left:80px;top:371.18px;" width="6.7" height="6.5" viewBox="0 0 6.7 6.5"><rect x="0.4" y="0.4" width="5.9" height="5.7" fill="#3a3a3a" stroke="#bbb" stroke-width="0.7"/><path d="M1.8 1.8 L4.8 4.6 M4.8 1.8 L1.8 4.6" stroke="#999" stroke-width="0.8"/></svg>
<div style="left:87.5px;top:370.48px;width:83.1px;height:7.7px;background:#c2c2c2;"></div>
<div style="left:87.5px;top:370.48px;width:83.1px;height:0.8px;background:#cdcdcd;"></div>
<div class="t" style="left:90px;top:371.96px;font-size:6.4px;line-height:6.4px;color:#161616;font-weight:normal;transform:scaleX(0.906);font-weight:normal;-webkit-text-stroke:0.25px #161616;">99.co-slogan</div>
<div style="left:173.4px;top:370.48px;width:34.6px;height:7.7px;background:#1f1f1f;"></div>
<div class="t" style="left:176px;top:371.96px;font-size:6.4px;line-height:6.4px;color:#b4c2d8;font-weight:normal;transform:scaleX(0.936);-webkit-text-stroke:0.15px #b4c2d8;">Normal</div>
<svg style="position:absolute;left:201px;top:372.88px;" width="5" height="3.5" viewBox="0 0 5 3.5"><path d="M0.5 0.7 L2.5 2.7 L4.5 0.7" fill="none" stroke="#aaa" stroke-width="0.7"/></svg>
<div style="left:210.5px;top:370.98px;width:7.2px;height:6.8px;background:#3c3c3c;"></div>
<div style="left:221.3px;top:370.48px;width:33.5px;height:7.7px;background:#1f1f1f;"></div>
<div class="t" style="left:224.5px;top:371.96px;font-size:6.4px;line-height:6.4px;color:#d4c8b8;font-weight:normal;transform:scaleX(0.850);-webkit-text-stroke:0.15px #d4c8b8;">Alpha</div>
<svg style="position:absolute;left:247px;top:372.88px;" width="5" height="3.5" viewBox="0 0 5 3.5"><path d="M0.5 0.7 L2.5 2.7 L4.5 0.7" fill="none" stroke="#aaa" stroke-width="0.7"/></svg>
<svg style="position:absolute;left:259.6px;top:370.88px;" width="7" height="7" viewBox="0 0 7 7"><path d="M5.2 6 A2.8 2.8 0 1 1 6.3 3.5 L6.3 4.2 Q6.2 5.1 5.4 5.1 Q4.6 5.1 4.6 4.2 L4.6 3.5" fill="none" stroke="#cfcfcf" stroke-width="0.8"/><circle cx="3.5" cy="3.5" r="1.1" fill="none" stroke="#cfcfcf" stroke-width="0.75"/></svg>
<div style="left:269.8px;top:370.48px;width:45.7px;height:7.7px;background:#1f1f1f;"></div>
<div class="t" style="left:272px;top:371.96px;font-size:6.4px;line-height:6.4px;color:#b4c2d8;font-weight:normal;transform:scaleX(1.013);-webkit-text-stroke:0.15px #b4c2d8;">None</div>
<svg style="position:absolute;left:309px;top:372.88px;" width="5" height="3.5" viewBox="0 0 5 3.5"><path d="M0.5 0.7 L2.5 2.7 L4.5 0.7" fill="none" stroke="#aaa" stroke-width="0.7"/></svg>
<div style="left:1px;top:378.28px;width:325px;height:0.93px;background:#3a3a3a;"></div>
<div style="left:1px;top:379.21px;width:325px;height:7.9px;background:#484848;"></div>
<div style="left:10px;top:379.21px;width:0.6px;height:7.9px;background:#3a3a3a;"></div>
<div style="left:18px;top:379.21px;width:0.6px;height:7.9px;background:#3a3a3a;"></div>
<div style="left:25.5px;top:379.21px;width:0.6px;height:7.9px;background:#3a3a3a;"></div>
<div style="left:33px;top:379.21px;width:0.6px;height:7.9px;background:#3a3a3a;"></div>
<div style="left:26.1px;top:379.60999999999996px;width:6.9px;height:7.1000000000000005px;background:#383838;"></div>
<div style="left:2px;top:379.60999999999996px;width:8px;height:7.1000000000000005px;background:#383838;"></div>
<svg style="position:absolute;left:38.5px;top:381.21px;" width="3.5" height="4.5" viewBox="0 0 3.5 4.5"><path d="M0.8 0.5 L2.6 2.2 L0.8 4" fill="none" stroke="#8a8a8a" stroke-width="0.6"/></svg>
<div style="left:44.6px;top:379.51px;width:7.2px;height:7.3px;background:#f7cfa5;"></div>
<div class="t" style="left:56px;top:381.03px;font-size:6px;line-height:6px;color:#d8d8d8;font-weight:normal;transform:scaleX(0.899);">8</div>
<svg style="position:absolute;left:71.5px;top:379.81px;" width="7" height="7" viewBox="0 0 7 7"><path d="M3.5 0.2 L4.4 2.6 L6.9 2.7 L4.9 4.3 L5.6 6.8 L3.5 5.4 L1.4 6.8 L2.1 4.3 L0.1 2.7 L2.6 2.6Z" fill="#e4e4e4"/></svg>
<svg style="position:absolute;left:80px;top:380.01px;" width="6.7" height="6.5" viewBox="0 0 6.7 6.5"><rect x="0.4" y="0.4" width="5.9" height="5.7" fill="#3a3a3a" stroke="#bbb" stroke-width="0.7"/><rect x="2.3" y="2.2" width="2.2" height="2.2" fill="#eee"/></svg>
<div style="left:87.5px;top:379.31px;width:83.1px;height:7.7px;background:#c2c2c2;"></div>
<div style="left:87.5px;top:379.31px;width:83.1px;height:0.8px;background:#cdcdcd;"></div>
<div class="t" style="left:90px;top:380.79px;font-size:6.4px;line-height:6.4px;color:#161616;font-weight:normal;transform:scaleX(0.921);font-weight:normal;-webkit-text-stroke:0.25px #161616;">mask 1</div>
<div style="left:173.4px;top:379.31px;width:34.6px;height:7.7px;background:#1f1f1f;"></div>
<div class="t" style="left:176px;top:380.79px;font-size:6.4px;line-height:6.4px;color:#b4c2d8;font-weight:normal;transform:scaleX(0.936);-webkit-text-stroke:0.15px #b4c2d8;">Normal</div>
<svg style="position:absolute;left:201px;top:381.71px;" width="5" height="3.5" viewBox="0 0 5 3.5"><path d="M0.5 0.7 L2.5 2.7 L4.5 0.7" fill="none" stroke="#aaa" stroke-width="0.7"/></svg>
<div style="left:210.5px;top:379.81px;width:7.2px;height:6.8px;background:#484848;"></div>
<div style="left:221.3px;top:379.31px;width:33.5px;height:7.7px;background:#1f1f1f;"></div>
<div class="t" style="left:224.5px;top:380.79px;font-size:6.4px;line-height:6.4px;color:#b4c2d8;font-weight:normal;transform:scaleX(0.850);-webkit-text-stroke:0.15px #b4c2d8;">None</div>
<svg style="position:absolute;left:247px;top:381.71px;" width="5" height="3.5" viewBox="0 0 5 3.5"><path d="M0.5 0.7 L2.5 2.7 L4.5 0.7" fill="none" stroke="#aaa" stroke-width="0.7"/></svg>
<svg style="position:absolute;left:259.6px;top:379.71px;" width="7" height="7" viewBox="0 0 7 7"><path d="M5.2 6 A2.8 2.8 0 1 1 6.3 3.5 L6.3 4.2 Q6.2 5.1 5.4 5.1 Q4.6 5.1 4.6 4.2 L4.6 3.5" fill="none" stroke="#cfcfcf" stroke-width="0.8"/><circle cx="3.5" cy="3.5" r="1.1" fill="none" stroke="#cfcfcf" stroke-width="0.75"/></svg>
<div style="left:269.8px;top:379.31px;width:45.7px;height:7.7px;background:#1f1f1f;"></div>
<div class="t" style="left:272px;top:380.79px;font-size:6.4px;line-height:6.4px;color:#b4c2d8;font-weight:normal;transform:scaleX(1.013);-webkit-text-stroke:0.15px #b4c2d8;">None</div>
<svg style="position:absolute;left:309px;top:381.71px;" width="5" height="3.5" viewBox="0 0 5 3.5"><path d="M0.5 0.7 L2.5 2.7 L4.5 0.7" fill="none" stroke="#aaa" stroke-width="0.7"/></svg>
<div style="left:1px;top:387.10999999999996px;width:325px;height:0.93px;background:#3a3a3a;"></div>
<div style="left:1px;top:388.03999999999996px;width:325px;height:7.9px;background:#484848;"></div>
<div style="left:10px;top:388.03999999999996px;width:0.6px;height:7.9px;background:#3a3a3a;"></div>
<div style="left:18px;top:388.03999999999996px;width:0.6px;height:7.9px;background:#3a3a3a;"></div>
<div style="left:25.5px;top:388.03999999999996px;width:0.6px;height:7.9px;background:#3a3a3a;"></div>
<div style="left:33px;top:388.03999999999996px;width:0.6px;height:7.9px;background:#3a3a3a;"></div>
<div style="left:18.6px;top:388.43999999999994px;width:6.9px;height:7.1000000000000005px;background:#383838;"></div>
<div style="left:26.1px;top:388.43999999999994px;width:6.9px;height:7.1000000000000005px;background:#383838;"></div>
<svg style="position:absolute;left:3.5px;top:390.03999999999996px;" width="7" height="4.5" viewBox="0 0 7 4.5"><path d="M0.3 2.2 Q3.5 -0.6 6.7 2.2 Q3.5 5 0.3 2.2Z" fill="#e6e6e6"/><circle cx="3.5" cy="2.2" r="1" fill="#333"/></svg>
<svg style="position:absolute;left:38.5px;top:390.03999999999996px;" width="3.5" height="4.5" viewBox="0 0 3.5 4.5"><path d="M0.8 0.5 L2.6 2.2 L0.8 4" fill="none" stroke="#8a8a8a" stroke-width="0.6"/></svg>
<div style="left:44.6px;top:388.34px;width:7.2px;height:7.3px;background:#f7cfa5;"></div>
<div class="t" style="left:56px;top:389.86px;font-size:6px;line-height:6px;color:#d8d8d8;font-weight:normal;transform:scaleX(0.899);">9</div>
<svg style="position:absolute;left:71.5px;top:388.64px;" width="7" height="7" viewBox="0 0 7 7"><path d="M3.5 0.2 L4.4 2.6 L6.9 2.7 L4.9 4.3 L5.6 6.8 L3.5 5.4 L1.4 6.8 L2.1 4.3 L0.1 2.7 L2.6 2.6Z" fill="#e4e4e4"/></svg>
<svg style="position:absolute;left:80px;top:388.84px;" width="6.7" height="6.5" viewBox="0 0 6.7 6.5"><rect x="0.4" y="0.4" width="5.9" height="5.7" fill="#3a3a3a" stroke="#bbb" stroke-width="0.7"/><path d="M1.8 1.8 L4.8 4.6 M4.8 1.8 L1.8 4.6" stroke="#999" stroke-width="0.8"/></svg>
<div style="left:87.5px;top:388.14px;width:83.1px;height:7.7px;background:#c2c2c2;"></div>
<div style="left:87.5px;top:388.14px;width:83.1px;height:0.8px;background:#cdcdcd;"></div>
<div class="t" style="left:90px;top:389.62px;font-size:6.4px;line-height:6.4px;color:#161616;font-weight:normal;transform:scaleX(0.941);font-weight:normal;-webkit-text-stroke:0.25px #161616;">99.co-main</div>
<div style="left:173.4px;top:388.14px;width:34.6px;height:7.7px;background:#1f1f1f;"></div>
<div class="t" style="left:176px;top:389.62px;font-size:6.4px;line-height:6.4px;color:#b4c2d8;font-weight:normal;transform:scaleX(0.936);-webkit-text-stroke:0.15px #b4c2d8;">Normal</div>
<svg style="position:absolute;left:201px;top:390.53999999999996px;" width="5" height="3.5" viewBox="0 0 5 3.5"><path d="M0.5 0.7 L2.5 2.7 L4.5 0.7" fill="none" stroke="#aaa" stroke-width="0.7"/></svg>
<div style="left:210.5px;top:388.64px;width:7.2px;height:6.8px;background:#3c3c3c;"></div>
<div style="left:221.3px;top:388.14px;width:33.5px;height:7.7px;background:#1f1f1f;"></div>
<div class="t" style="left:224.5px;top:389.62px;font-size:6.4px;line-height:6.4px;color:#d4c8b8;font-weight:normal;transform:scaleX(0.850);-webkit-text-stroke:0.15px #d4c8b8;">Alpha</div>
<svg style="position:absolute;left:247px;top:390.53999999999996px;" width="5" height="3.5" viewBox="0 0 5 3.5"><path d="M0.5 0.7 L2.5 2.7 L4.5 0.7" fill="none" stroke="#aaa" stroke-width="0.7"/></svg>
<svg style="position:absolute;left:259.6px;top:388.53999999999996px;" width="7" height="7" viewBox="0 0 7 7"><path d="M5.2 6 A2.8 2.8 0 1 1 6.3 3.5 L6.3 4.2 Q6.2 5.1 5.4 5.1 Q4.6 5.1 4.6 4.2 L4.6 3.5" fill="none" stroke="#cfcfcf" stroke-width="0.8"/><circle cx="3.5" cy="3.5" r="1.1" fill="none" stroke="#cfcfcf" stroke-width="0.75"/></svg>
<div style="left:269.8px;top:388.14px;width:45.7px;height:7.7px;background:#1f1f1f;"></div>
<div class="t" style="left:272px;top:389.62px;font-size:6.4px;line-height:6.4px;color:#b4c2d8;font-weight:normal;transform:scaleX(1.013);-webkit-text-stroke:0.15px #b4c2d8;">None</div>
<svg style="position:absolute;left:309px;top:390.53999999999996px;" width="5" height="3.5" viewBox="0 0 5 3.5"><path d="M0.5 0.7 L2.5 2.7 L4.5 0.7" fill="none" stroke="#aaa" stroke-width="0.7"/></svg>
<div style="left:1px;top:395.93999999999994px;width:325px;height:0.93px;background:#3a3a3a;"></div>
<div style="left:1px;top:396.87px;width:325px;height:7.9px;background:#2c2c2c;"></div>
<div style="left:18.6px;top:397.27px;width:6.9px;height:7.1000000000000005px;background:#262626;"></div>
<svg style="position:absolute;left:3.5px;top:398.87px;" width="7" height="4.5" viewBox="0 0 7 4.5"><path d="M0.3 2.2 Q3.5 -0.6 6.7 2.2 Q3.5 5 0.3 2.2Z" fill="#e6e6e6"/><circle cx="3.5" cy="2.2" r="1" fill="#333"/></svg>
<svg style="position:absolute;left:28px;top:397.87px;" width="6" height="6.5" viewBox="0 0 6 6.5"><path d="M1.5 2.8 L1.5 1.9 Q1.5 0.5 3 0.5 Q4.5 0.5 4.5 1.9 L4.5 2.8" fill="none" stroke="#ddd" stroke-width="0.9"/><rect x="0.5" y="2.8" width="5" height="3.6" fill="#ddd"/><rect x="2.6" y="3.8" width="0.9" height="1.4" fill="#333"/></svg>
<svg style="position:absolute;left:38.5px;top:398.87px;" width="3.5" height="4.5" viewBox="0 0 3.5 4.5"><path d="M0.8 0.5 L2.6 2.2 L0.8 4" fill="none" stroke="#8a8a8a" stroke-width="0.6"/></svg>
<div style="left:44.6px;top:397.17px;width:7.2px;height:7.3px;background:#bf3a3a;"></div>
<div class="t" style="left:56px;top:398.69px;font-size:6px;line-height:6px;color:#d8d8d8;font-weight:normal;transform:scaleX(0.929);">10</div>
<div style="left:71.4px;top:397.47px;width:6.6px;height:6.6px;background:#ffffff;"></div>
<div class="t" style="left:81px;top:398.45px;font-size:6.4px;line-height:6.4px;color:#b8bcc4;font-weight:normal;transform:scaleX(0.811);">BG</div>
<div style="left:173.4px;top:396.97px;width:34.6px;height:7.7px;background:#1f1f1f;"></div>
<div class="t" style="left:176px;top:398.45px;font-size:6.4px;line-height:6.4px;color:#b4c2d8;font-weight:normal;transform:scaleX(0.936);-webkit-text-stroke:0.15px #b4c2d8;">Normal</div>
<svg style="position:absolute;left:201px;top:399.37px;" width="5" height="3.5" viewBox="0 0 5 3.5"><path d="M0.5 0.7 L2.5 2.7 L4.5 0.7" fill="none" stroke="#aaa" stroke-width="0.7"/></svg>
<div style="left:210.5px;top:397.47px;width:7.2px;height:6.8px;background:#3c3c3c;"></div>
<div style="left:221.3px;top:396.97px;width:33.5px;height:7.7px;background:#1f1f1f;"></div>
<div class="t" style="left:224.5px;top:398.45px;font-size:6.4px;line-height:6.4px;color:#b4c2d8;font-weight:normal;transform:scaleX(0.850);-webkit-text-stroke:0.15px #b4c2d8;">None</div>
<svg style="position:absolute;left:247px;top:399.37px;" width="5" height="3.5" viewBox="0 0 5 3.5"><path d="M0.5 0.7 L2.5 2.7 L4.5 0.7" fill="none" stroke="#aaa" stroke-width="0.7"/></svg>
<svg style="position:absolute;left:259.6px;top:397.37px;" width="7" height="7" viewBox="0 0 7 7"><path d="M5.2 6 A2.8 2.8 0 1 1 6.3 3.5 L6.3 4.2 Q6.2 5.1 5.4 5.1 Q4.6 5.1 4.6 4.2 L4.6 3.5" fill="none" stroke="#cfcfcf" stroke-width="0.8"/><circle cx="3.5" cy="3.5" r="1.1" fill="none" stroke="#cfcfcf" stroke-width="0.75"/></svg>
<div style="left:269.8px;top:396.97px;width:45.7px;height:7.7px;background:#1f1f1f;"></div>
<div class="t" style="left:272px;top:398.45px;font-size:6.4px;line-height:6.4px;color:#b4c2d8;font-weight:normal;transform:scaleX(1.013);-webkit-text-stroke:0.15px #b4c2d8;">None</div>
<svg style="position:absolute;left:309px;top:399.37px;" width="5" height="3.5" viewBox="0 0 5 3.5"><path d="M0.5 0.7 L2.5 2.7 L4.5 0.7" fill="none" stroke="#aaa" stroke-width="0.7"/></svg>
<div style="left:1px;top:404.77px;width:325px;height:0.93px;background:#3a3a3a;"></div>
<div style="left:325.5px;top:290px;width:1.5px;height:117px;background:#1a1a1a;"></div>
<div style="left:327px;top:290px;width:324px;height:117px;background:#272624;"></div>
<div style="left:327px;top:292.3px;width:324px;height:3.5px;background:#6a6a6a;"></div>
<svg style="position:absolute;left:327px;top:291.5px;" width="5.5" height="5" viewBox="0 0 5.5 5"><circle cx="2.7" cy="2.5" r="2.3" fill="#3a8ee6"/><circle cx="2.7" cy="2.5" r="0.8" fill="#cde"/></svg>
<div style="left:327px;top:296px;width:324px;height:10.8px;background:#1f1f1f;"></div>
<div class="t" style="left:329.5px;top:298.42px;font-size:6px;line-height:6px;color:#c0c0c0;font-weight:normal;transform:scaleX(0.959);">00f</div>
<div class="t" style="left:357.664px;top:298.42px;font-size:6px;line-height:6px;color:#c0c0c0;font-weight:normal;transform:scaleX(0.800);">10f</div>
<div style="left:360.7px;top:303.8px;width:0.7px;height:2.4px;background:#9a9a9a;"></div>
<div class="t" style="left:388.06399999999996px;top:298.42px;font-size:6px;line-height:6px;color:#c0c0c0;font-weight:normal;transform:scaleX(0.800);">20f</div>
<div style="left:391.09999999999997px;top:303.8px;width:0.7px;height:2.4px;background:#9a9a9a;"></div>
<div class="t" style="left:414.52799999999996px;top:298.42px;font-size:6px;line-height:6px;color:#c0c0c0;font-weight:normal;transform:scaleX(0.800);">01:00f</div>
<div style="left:420.9px;top:303.8px;width:0.7px;height:2.4px;background:#9a9a9a;"></div>
<div class="t" style="left:448.664px;top:298.42px;font-size:6px;line-height:6px;color:#c0c0c0;font-weight:normal;transform:scaleX(0.800);">10f</div>
<div style="left:451.7px;top:303.8px;width:0.7px;height:2.4px;background:#9a9a9a;"></div>
<div class="t" style="left:479.06399999999996px;top:298.42px;font-size:6px;line-height:6px;color:#c0c0c0;font-weight:normal;transform:scaleX(0.800);">20f</div>
<div style="left:482.09999999999997px;top:303.8px;width:0.7px;height:2.4px;background:#9a9a9a;"></div>
<div class="t" style="left:506.12799999999993px;top:298.42px;font-size:6px;line-height:6px;color:#c0c0c0;font-weight:normal;transform:scaleX(0.800);">02:00f</div>
<div style="left:512.5px;top:303.8px;width:0.7px;height:2.4px;background:#9a9a9a;"></div>
<div class="t" style="left:539.864px;top:298.42px;font-size:6px;line-height:6px;color:#c0c0c0;font-weight:normal;transform:scaleX(0.800);">10f</div>
<div style="left:542.9000000000001px;top:303.8px;width:0.7px;height:2.4px;background:#9a9a9a;"></div>
<div class="t" style="left:569.864px;top:298.42px;font-size:6px;line-height:6px;color:#c0c0c0;font-weight:normal;transform:scaleX(0.800);">20f</div>
<div style="left:572.9000000000001px;top:303.8px;width:0.7px;height:2.4px;background:#9a9a9a;"></div>
<div class="t" style="left:597.328px;top:298.42px;font-size:6px;line-height:6px;color:#c0c0c0;font-weight:normal;transform:scaleX(0.800);">03:00f</div>
<div style="left:603.7px;top:303.8px;width:0.7px;height:2.4px;background:#9a9a9a;"></div>
<div class="t" style="left:631.264px;top:298.42px;font-size:6px;line-height:6px;color:#c0c0c0;font-weight:normal;transform:scaleX(0.800);">10f</div>
<div style="left:634.3000000000001px;top:303.8px;width:0.7px;height:2.4px;background:#9a9a9a;"></div>
<div style="left:327px;top:306.8px;width:324px;height:8px;background:#6e6e6e;"></div>
<div style="left:327px;top:314.8px;width:324px;height:0.4px;background:#3a3a3a;"></div>
<div style="left:330px;top:315px;width:321px;height:2.5px;background:#1ec41e;"></div>
<div style="left:327px;top:317.4px;width:3px;height:7.9px;background:#3a3a3a;"></div>
<div style="left:330px;top:317.4px;width:321px;height:7.9px;background:#6a7ce0;"></div>
<div style="left:330px;top:317.59999999999997px;width:321px;height:1.3px;background:#8394ec;"></div>
<div style="left:330px;top:324.2px;width:321px;height:1.1px;background:#5567c0;"></div>
<div style="left:327px;top:325.29999999999995px;width:324px;height:0.93px;background:#433d3d;"></div>
<div style="left:327px;top:326.22999999999996px;width:3px;height:7.9px;background:#3a3a3a;"></div>
<div style="left:330px;top:326.22999999999996px;width:321px;height:7.9px;background:#6a7ce0;"></div>
<div style="left:330px;top:326.42999999999995px;width:321px;height:1.3px;background:#8394ec;"></div>
<div style="left:330px;top:333.03px;width:321px;height:1.1px;background:#5567c0;"></div>
<div style="left:327px;top:334.12999999999994px;width:324px;height:0.93px;background:#433d3d;"></div>
<div style="left:327px;top:335.06px;width:3px;height:7.9px;background:#3a3a3a;"></div>
<div style="left:330px;top:335.06px;width:321px;height:7.9px;background:#6a7ce0;"></div>
<div style="left:330px;top:335.26px;width:321px;height:1.3px;background:#8394ec;"></div>
<div style="left:330px;top:341.86px;width:321px;height:1.1px;background:#5567c0;"></div>
<div style="left:327px;top:342.96px;width:324px;height:0.93px;background:#433d3d;"></div>
<div style="left:327px;top:343.89px;width:3px;height:7.9px;background:#3a3a3a;"></div>
<div style="left:330px;top:343.89px;width:321px;height:7.9px;background:#6a7ce0;"></div>
<div style="left:330px;top:344.09px;width:321px;height:1.3px;background:#8394ec;"></div>
<div style="left:330px;top:350.69px;width:321px;height:1.1px;background:#5567c0;"></div>
<div style="left:327px;top:351.78999999999996px;width:324px;height:0.93px;background:#433d3d;"></div>
<div style="left:327px;top:352.71999999999997px;width:3px;height:7.9px;background:#3a3a3a;"></div>
<div style="left:330px;top:352.71999999999997px;width:321px;height:7.9px;background:#efc49d;"></div>
<div style="left:330px;top:352.91999999999996px;width:321px;height:1.3px;background:#f6d4b3;"></div>
<div style="left:330px;top:359.52px;width:321px;height:1.1px;background:#cba584;"></div>
<div style="left:327px;top:360.61999999999995px;width:324px;height:0.93px;background:#433d3d;"></div>
<div style="left:327px;top:361.54999999999995px;width:3px;height:7.9px;background:#3a3a3a;"></div>
<div style="left:330px;top:361.54999999999995px;width:321px;height:7.9px;background:#efc49d;"></div>
<div style="left:330px;top:361.74999999999994px;width:321px;height:1.3px;background:#f6d4b3;"></div>
<div style="left:330px;top:368.34999999999997px;width:321px;height:1.1px;background:#cba584;"></div>
<div style="left:327px;top:369.44999999999993px;width:324px;height:0.93px;background:#433d3d;"></div>
<div style="left:327px;top:370.38px;width:3px;height:7.9px;background:#3a3a3a;"></div>
<div style="left:330px;top:370.38px;width:321px;height:7.9px;background:#efc49d;"></div>
<div style="left:330px;top:370.58px;width:321px;height:1.3px;background:#f6d4b3;"></div>
<div style="left:330px;top:377.18px;width:321px;height:1.1px;background:#cba584;"></div>
<div style="left:327px;top:378.28px;width:324px;height:0.93px;background:#433d3d;"></div>
<div style="left:327px;top:379.21px;width:3px;height:7.9px;background:#3a3a3a;"></div>
<div style="left:330px;top:379.21px;width:321px;height:7.9px;background:#efc49d;"></div>
<div style="left:330px;top:379.40999999999997px;width:321px;height:1.3px;background:#f6d4b3;"></div>
<div style="left:330px;top:386.01px;width:321px;height:1.1px;background:#cba584;"></div>
<div style="left:327px;top:387.10999999999996px;width:324px;height:0.93px;background:#433d3d;"></div>
<div style="left:327px;top:388.03999999999996px;width:3px;height:7.9px;background:#3a3a3a;"></div>
<div style="left:330px;top:388.03999999999996px;width:321px;height:7.9px;background:#efc49d;"></div>
<div style="left:330px;top:388.23999999999995px;width:321px;height:1.3px;background:#f6d4b3;"></div>
<div style="left:330px;top:394.84px;width:321px;height:1.1px;background:#cba584;"></div>
<div style="left:327px;top:395.93999999999994px;width:324px;height:0.93px;background:#433d3d;"></div>
<div style="left:327px;top:396.87px;width:3px;height:7.9px;background:#3a3a3a;"></div>
<div style="left:330px;top:396.87px;width:321px;height:7.9px;background:#8a3b45;"></div>
<div style="left:330px;top:397.07px;width:321px;height:1.3px;background:#9a4b55;"></div>
<div style="left:330px;top:403.67px;width:321px;height:1.1px;background:#6e2f38;"></div>
<div style="left:327px;top:404.77px;width:324px;height:0.93px;background:#433d3d;"></div>
<div style="left:329.4px;top:306.8px;width:1.0px;height:100.2px;background:#5a9ae8;"></div>
<div style="left:330.4px;top:317.4px;width:1.4px;height:87.6px;background:#b8d8ff;"></div>
<svg style="position:absolute;left:327.5px;top:298.5px;" width="7" height="8" viewBox="0 0 7 8"><path d="M0.5 0.5 L6.5 0.5 L6.5 4 L3.5 7.5 L0.5 4Z" fill="#3a8ee6"/><circle cx="2.3" cy="2.3" r="0.6" fill="#cde"/><circle cx="4.7" cy="2.3" r="0.6" fill="#cde"/><circle cx="3.5" cy="4.2" r="0.6" fill="#cde"/></svg>
<div style="left:327.3px;top:306.8px;width:4.3px;height:8px;background:#3a8ee6;border-radius:1.5px;"></div>
<svg style="position:absolute;left:359.8px;top:298.5px;" width="7" height="9" viewBox="0 0 7 9"><path d="M0.6 0.5 L0.6 7.2 L2.3 5.8 L3.5 8.3 L4.6 7.8 L3.5 5.4 L5.8 5.3Z" fill="#f2f2f2" stroke="#1a1a1a" stroke-width="0.4"/></svg>
<div style="left:2.3px;top:12px;width:0.8px;height:10px;background:#3a3a3a;"></div>
<div style="left:21.5px;top:12px;width:0.8px;height:10px;background:#3a3a3a;"></div>
<svg style="position:absolute;left:7.8px;top:12.6px;" width="9" height="8.5" viewBox="0 0 9 8.5"><path d="M4.5 0.3 L8.7 4.2 L7.4 4.2 L7.4 8.2 L5.3 8.2 L5.3 5.5 L3.7 5.5 L3.7 8.2 L1.6 8.2 L1.6 4.2 L0.3 4.2Z" fill="#e8e8e8"/></svg>
<div style="left:23px;top:11.2px;width:11px;height:11.3px;background:#171717;"></div>
<svg style="position:absolute;left:25.5px;top:12.5px;" width="7.5" height="8.5" viewBox="0 0 7.5 8.5"><path d="M0.8 0.3 L0.8 8 L3 6 L7 5.5Z" fill="#3a93f0"/></svg>
<svg style="position:absolute;left:37px;top:12px;" width="10" height="10" viewBox="0 0 10 10"><path d="M3 9.6 L1.2 6.2 Q0.8 5.3 1.6 5.1 Q2.2 5 2.6 5.8 L3.1 6.6 L2.9 1.8 Q2.9 1.1 3.5 1.1 Q4.1 1.1 4.1 1.8 L4.2 5 L4.4 0.9 Q4.4 0.3 5 0.3 Q5.6 0.3 5.6 0.9 L5.6 5 L6 1.4 Q6.1 0.8 6.7 0.9 Q7.2 1 7.2 1.6 L6.9 5.3 L7.6 2.6 Q7.8 2 8.3 2.1 Q8.8 2.3 8.7 2.9 L8 7 Q7.6 9 6.5 9.6Z" fill="#e6e6e6"/></svg>
<svg style="position:absolute;left:50px;top:12.5px;" width="9" height="9" viewBox="0 0 9 9"><circle cx="3.6" cy="3.6" r="2.8" fill="none" stroke="#ddd" stroke-width="0.9"/><path d="M5.6 5.6 L8.5 8.5" stroke="#ddd" stroke-width="1.1"/></svg>
<div style="left:62.3px;top:12px;width:0.8px;height:10px;background:#3a3a3a;"></div>
<svg style="position:absolute;left:67px;top:12.8px;" width="10" height="9" viewBox="0 0 10 9"><ellipse cx="4.5" cy="4" rx="3.5" ry="2.5" fill="none" stroke="#6a6a6a" stroke-width="1"/><circle cx="5.5" cy="3" r="1.4" fill="#6a6a6a"/><path d="M8.5 7.5 L9.5 8.5" stroke="#666" stroke-width="0.6"/></svg>
<svg style="position:absolute;left:80px;top:12.8px;" width="9" height="9" viewBox="0 0 9 9"><path d="M4 0.5 L4 7.5 M0.5 4 L7.5 4" stroke="#6a6a6a" stroke-width="1.2"/><rect x="7.8" y="7.6" width="0.8" height="0.8" fill="#666"/></svg>
<svg style="position:absolute;left:95.5px;top:12.8px;" width="8" height="9" viewBox="0 0 8 9"><path d="M3.5 0.5 L3.5 7 M1 4.5 L3.5 7 L6 4.5" fill="none" stroke="#6a6a6a" stroke-width="1.1"/><rect x="6.8" y="7.6" width="0.8" height="0.8" fill="#666"/></svg>
<div style="left:105.3px;top:12px;width:0.8px;height:10px;background:#3a3a3a;"></div>
<svg style="position:absolute;left:110px;top:12.8px;" width="9" height="9" viewBox="0 0 9 9"><path d="M2.2 2.2 A3.4 3.4 0 1 1 1.2 5" fill="none" stroke="#ddd" stroke-width="1"/><path d="M0.5 0.8 L3 0.8 L3 3.3Z" fill="#ddd"/></svg>
<svg style="position:absolute;left:123px;top:12.8px;" width="10" height="9" viewBox="0 0 10 9"><rect x="0.3" y="0.3" width="1.8" height="1.8" fill="#ddd"/><rect x="7.6" y="0.3" width="1.8" height="1.8" fill="#ddd"/><rect x="0.3" y="6.6" width="1.8" height="1.8" fill="#ddd"/><rect x="7.6" y="6.6" width="1.8" height="1.8" fill="#ddd"/><path d="M3 4.5 L6.6 4.5 M4.8 2.7 L4.8 6.3" stroke="#ddd" stroke-width="1"/><path d="M2.5 1.2 L7 1.2 M2.5 7.5 L7 7.5 M1.2 2.5 L1.2 6.3 M8.5 2.5 L8.5 6.3" stroke="#888" stroke-width="0.5" stroke-dasharray="0.8 0.8"/></svg>
<div style="left:135.5px;top:12px;width:0.8px;height:10px;background:#3a3a3a;"></div>
<svg style="position:absolute;left:139px;top:12.8px;" width="10" height="9" viewBox="0 0 10 9"><rect x="0.6" y="0.6" width="7.6" height="7" fill="#555" stroke="#d8d8d8" stroke-width="1"/><rect x="8.6" y="8" width="0.9" height="0.9" fill="#aaa"/></svg>
<svg style="position:absolute;left:152px;top:12.5px;" width="9" height="9.5" viewBox="0 0 9 9.5"><path d="M1 8.5 L1.5 5 L5.5 1 L8 3.5 L4 7.5Z" fill="#e0e0e0"/><circle cx="3.2" cy="5.7" r="0.8" fill="#333"/><rect x="8" y="8.3" width="0.9" height="0.9" fill="#aaa"/></svg>
<div style="left:163px;top:12px;width:0.8px;height:10px;background:#3a3a3a;"></div>
<svg style="position:absolute;left:165px;top:12.5px;" width="10" height="10" viewBox="0 0 10 10"><path d="M0.5 0.8 L8 0.8 L8 2.5 L7.2 2.5 L7 1.8 L5 1.8 L5 8 L6 8.3 L6 9 L2.5 9 L2.5 8.3 L3.5 8 L3.5 1.8 L1.5 1.8 L1.3 2.5 L0.5 2.5Z" fill="#e0e0e0"/><rect x="8.8" y="8.5" width="0.9" height="0.9" fill="#aaa"/></svg>
<div style="left:179.5px;top:12px;width:0.8px;height:10px;background:#3a3a3a;"></div>
<svg style="position:absolute;left:182px;top:12.3px;" width="9.5" height="10" viewBox="0 0 9.5 10"><path d="M9 0.6 L4 5.6 L5.2 6.8 L9.6 1.4Z" fill="#e6e6e6"/><path d="M3.6 6 Q1.8 6.2 1.6 8.2 L0.6 9.4 Q3.6 9.6 4.8 7.2Z" fill="#e6e6e6"/></svg>
<svg style="position:absolute;left:195.5px;top:12.3px;" width="10" height="9.5" viewBox="0 0 10 9.5"><circle cx="4.6" cy="1.8" r="1.5" fill="#e6e6e6"/><rect x="3.9" y="2.5" width="1.4" height="3" fill="#e6e6e6"/><path d="M1 5.5 L8.2 5.5 L8.6 7.3 L0.6 7.3Z" fill="#e6e6e6"/><rect x="0.3" y="7.6" width="8.6" height="1.4" fill="#bdbdbd"/></svg>
<svg style="position:absolute;left:207.5px;top:12.3px;" width="10" height="10" viewBox="0 0 10 10"><g transform="rotate(-40 5 5)"><rect x="0.8" y="2.6" width="8.4" height="4.8" rx="0.8" fill="#e6e6e6"/><rect x="0.8" y="2.6" width="3" height="4.8" fill="#9a9a9a"/></g></svg>
<div style="left:221.5px;top:12px;width:0.8px;height:10px;background:#3a3a3a;"></div>
<svg style="position:absolute;left:224.5px;top:12.3px;" width="10.5" height="10" viewBox="0 0 10.5 10"><path d="M10 0.8 L5.2 6 L6.1 6.9 L10.5 1.6Z" fill="#e6e6e6"/><path d="M4.8 6.4 Q3.4 6.6 3.2 8.4 Q5.2 8.5 5.8 7.2Z" fill="#e6e6e6"/><circle cx="2.2" cy="1.3" r="1" fill="#dcdcdc"/><path d="M2.2 2.3 L1.8 5 L0.8 7.5 M1.9 3.5 L3.5 4.5 M1.8 5 L3 7.2" stroke="#dcdcdc" stroke-width="0.9" fill="none"/><rect x="9.3" y="8.8" width="0.9" height="0.9" fill="#aaa"/></svg>
<svg style="position:absolute;left:239.5px;top:12.3px;" width="10" height="10" viewBox="0 0 10 10"><path d="M5.5 0.5 L9.5 4.5 L8.5 5 L7 4.3 L5.3 6.2 L5.6 8 L5 8.6 L1.4 5 L2 4.4 L3.8 4.7 L5.7 3 L5 1.5Z" fill="#e6e6e6"/><path d="M3 6.5 L0.5 9" stroke="#e6e6e6" stroke-width="0.9"/><rect x="8.8" y="8.6" width="0.9" height="0.9" fill="#aaa"/></svg>
<div style="left:264px;top:12px;width:0.8px;height:10px;background:#3a3a3a;"></div>
<div style="left:275px;top:11.5px;width:12px;height:11px;background:#1e2226;"></div>
<svg style="position:absolute;left:276.5px;top:12.8px;" width="10" height="9" viewBox="0 0 10 9"><circle cx="4.5" cy="1.8" r="1.2" fill="#2e4a68"/><circle cx="1.8" cy="7" r="1.2" fill="#2e4a68"/><circle cx="7.2" cy="7" r="1.2" fill="#2e4a68"/><path d="M4.5 3 L2 6 M4.5 3 L7 6" stroke="#2e4a68" stroke-width="0.9"/></svg>
<svg style="position:absolute;left:288px;top:12.8px;" width="10" height="9" viewBox="0 0 10 9"><path d="M4.5 1 L4.5 4.5 L1.5 7.5 M4.5 4.5 L7.5 7.5" fill="none" stroke="#555" stroke-width="0.9"/><circle cx="4.5" cy="1.2" r="0.9" fill="#555"/></svg>
<svg style="position:absolute;left:301px;top:12.8px;" width="9" height="9" viewBox="0 0 9 9"><path d="M1 1 L7.5 2 L6.5 7.5 L2 7Z" fill="none" stroke="#4a4a4a" stroke-width="0.9"/><circle cx="1" cy="1" r="0.9" fill="#4a4a4a"/><circle cx="6.5" cy="7.5" r="0.9" fill="#4a4a4a"/></svg>
<svg style="position:absolute;left:319px;top:13.2px;" width="8" height="8" viewBox="0 0 8 8"><rect x="0.6" y="0.6" width="6.8" height="6.8" rx="1" fill="none" stroke="#d0d0d0" stroke-width="1"/></svg>
<div class="t" style="left:328px;top:14.98px;font-size:6.4px;line-height:6.4px;color:#a8a8a8;font-weight:normal;transform:scaleX(0.906);">Snapping</div>
<svg style="position:absolute;left:357.5px;top:13px;" width="8" height="8" viewBox="0 0 8 8"><path d="M0.5 7.5 L4 4 L7 7" fill="none" stroke="#e0e0e0" stroke-width="0.9"/><path d="M4.5 3.5 L7.5 0.5" stroke="#e0e0e0" stroke-width="1.1"/><path d="M5.5 0.5 L7.5 0.5 L7.5 2.5" fill="none" stroke="#e0e0e0" stroke-width="0.8"/></svg>
<div style="left:368.5px;top:11.5px;width:11px;height:11px;background:#1a1d20;"></div>
<svg style="position:absolute;left:369.5px;top:12.8px;" width="9" height="9" viewBox="0 0 9 9"><path d="M0.5 2.5 L0.5 0.5 L2.5 0.5 M6.5 0.5 L8.5 0.5 L8.5 2.5 M8.5 6.5 L8.5 8.5 L6.5 8.5 M2.5 8.5 L0.5 8.5 L0.5 6.5" fill="none" stroke="#3a93f0" stroke-width="1"/><path d="M2.5 2.5 L6.5 6.5 M6.5 2.5 L2.5 6.5" stroke="#3a93f0" stroke-width="0.9"/></svg>
<div style="left:385.8px;top:12px;width:0.8px;height:10px;background:#3a3a3a;"></div>
<div class="t" style="left:392px;top:14.98px;font-size:6.4px;line-height:6.4px;color:#3f8ee0;font-weight:normal;transform:scaleX(0.904);">Fill:</div>
<div style="left:403.2px;top:12.4px;width:12.3px;height:9px;background:#1e1e1e;border:0.9px solid #b8b8b8;box-sizing:border-box;"></div>
<div class="t" style="left:407.2px;top:14.47px;font-size:7px;line-height:7px;color:#e8e8e8;font-weight:normal;transform:scaleX(1.105);">?</div>
<div class="t" style="left:421px;top:14.98px;font-size:6.4px;line-height:6.4px;color:#3f8ee0;font-weight:normal;transform:scaleX(0.912);">Stroke:</div>
<div style="left:441px;top:12.4px;width:12.5px;height:9px;background:#1e1e1e;border:0.9px solid #b8b8b8;box-sizing:border-box;"></div>
<div class="t" style="left:445.1px;top:14.47px;font-size:7px;line-height:7px;color:#e8e8e8;font-weight:normal;transform:scaleX(1.105);">?</div>
<div style="left:459.3px;top:17.2px;width:2.2px;height:0.7px;background:#999;"></div>
<div class="t" style="left:464px;top:14.98px;font-size:6.4px;line-height:6.4px;color:#888;font-weight:normal;transform:scaleX(1.110);">px</div>
<div class="t" style="left:486px;top:14.98px;font-size:6.4px;line-height:6.4px;color:#888;font-weight:normal;transform:scaleX(0.912);">Add:</div>
<svg style="position:absolute;left:500px;top:13.5px;" width="7" height="7" viewBox="0 0 7 7"><circle cx="3.5" cy="3.5" r="3.3" fill="#e8e8e8"/><path d="M2.6 1.9 L5 3.5 L2.6 5.1Z" fill="#262626"/></svg>
<div class="t" style="left:530.7px;top:14.98px;font-size:6.4px;line-height:6.4px;color:#3f8ee0;font-weight:normal;transform:scaleX(0.927);">Default</div>
<div style="left:557px;top:14.5px;width:4.5px;height:1px;background:#2a5d96;"></div>
<div style="left:557px;top:16.2px;width:4.5px;height:1px;background:#2a5d96;"></div>
<div style="left:557px;top:17.9px;width:4.5px;height:1px;background:#2a5d96;"></div>
<div class="t" style="left:573px;top:14.98px;font-size:6.4px;line-height:6.4px;color:#a6957e;font-weight:normal;transform:scaleX(0.886);">Learn</div>
<div class="t" style="left:611px;top:14.98px;font-size:6.4px;line-height:6.4px;color:#a8a8a8;font-weight:normal;transform:scaleX(0.905);">Standard</div>
</body></html>
